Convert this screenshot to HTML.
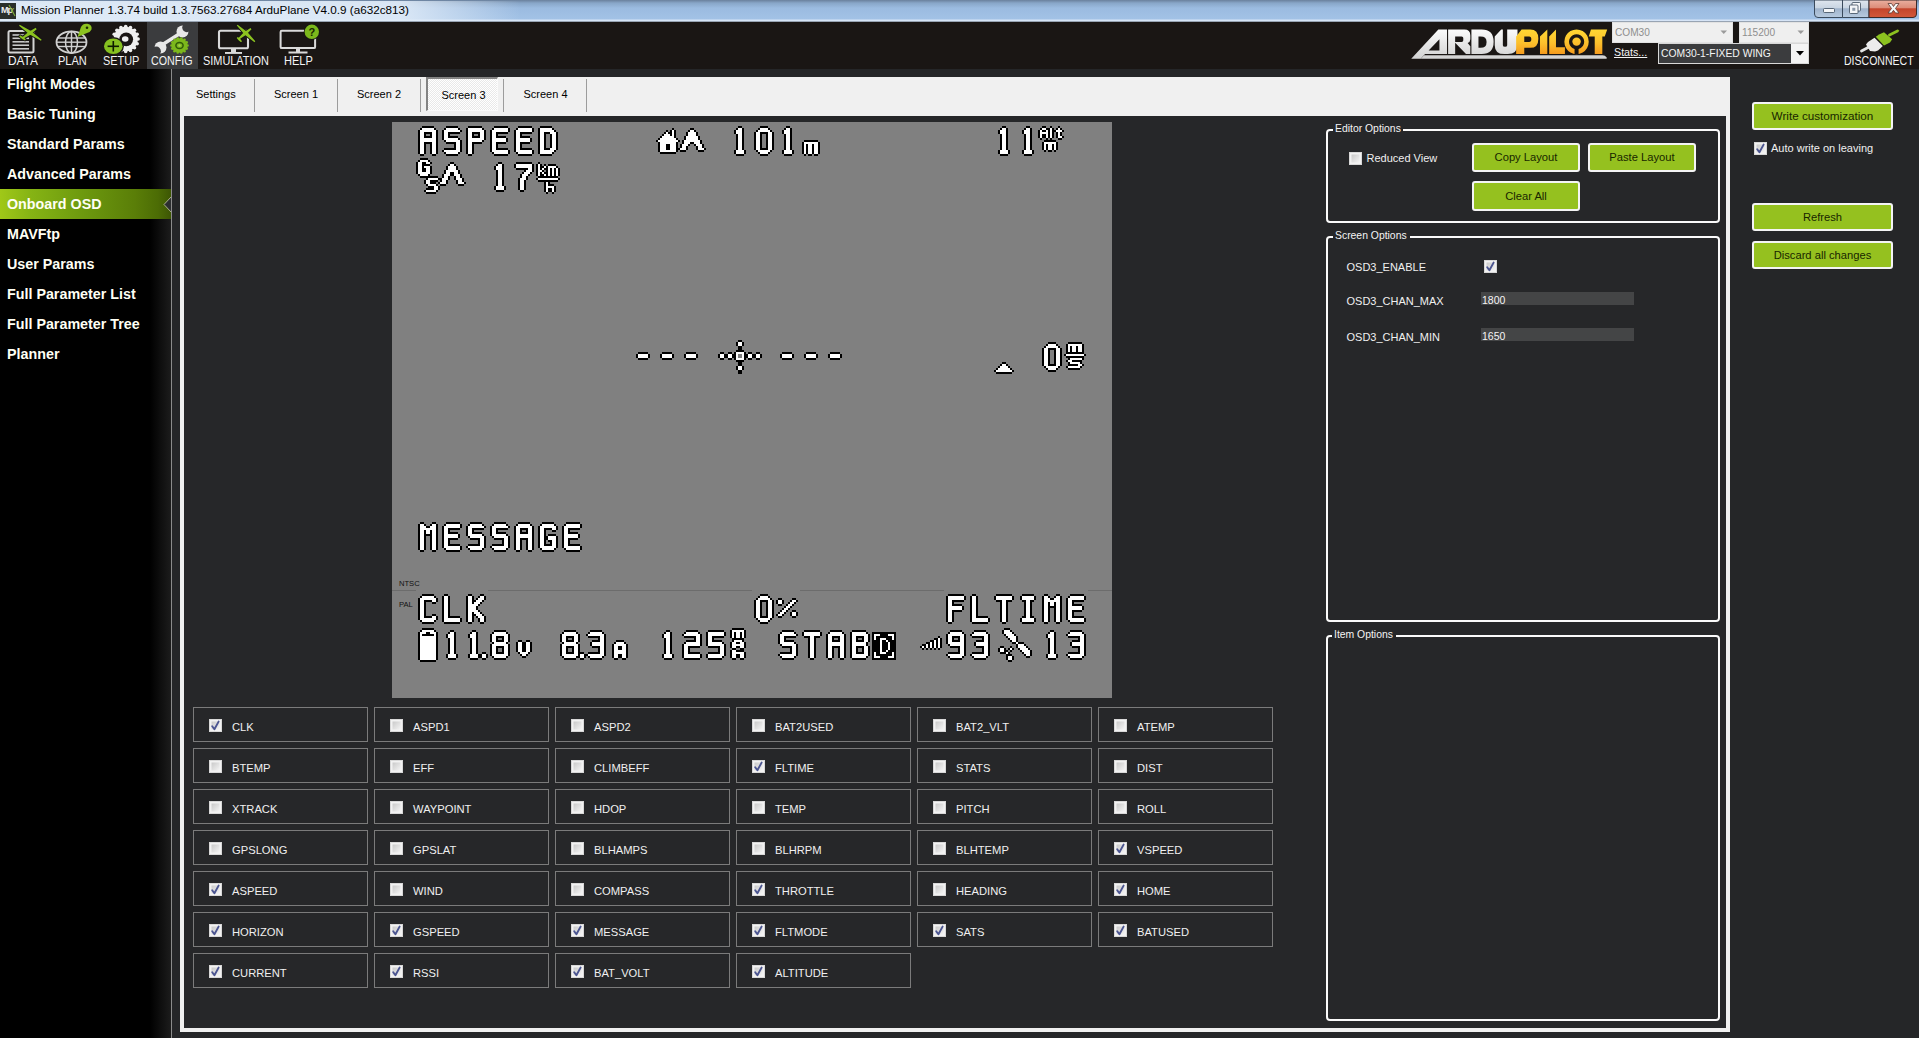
<!DOCTYPE html>
<html><head><meta charset="utf-8">
<style>
*{box-sizing:border-box}
html,body{margin:0;padding:0}
body{width:1919px;height:1038px;overflow:hidden;position:relative;background:#252628;font-family:"Liberation Sans",sans-serif;font-size:11px}
.a{position:absolute;white-space:nowrap}
#title{left:0;top:0;width:1919px;height:22px;background:linear-gradient(180deg,#6a809c 0,#88a6c8 3px,#9bbbe0 8px,#a2c2e6 19px,#d6e4f6 20px,#d6e4f6 21px,#5a6470 22px)}
#tglow{left:0;top:1px;width:520px;height:20px;background:linear-gradient(90deg,rgba(225,236,248,.95) 0,rgba(225,236,248,.9) 400px,rgba(225,236,248,0) 520px)}
#toolbar{left:0;top:22px;width:1919px;height:47px;background:#1a1614}
.tb{color:#f4f4f4;font-size:12px;top:54.3px;line-height:normal;transform:scaleX(0.9);transform-origin:0 0}
#side{left:0;top:69px;width:171px;height:969px;background:linear-gradient(90deg,#000 0,#000 150px,#1c1c1c 171px)}
#sline{left:171px;top:69px;width:1px;height:969px;background:#8c8c8c}
.si{left:7px;color:#fffff4;font-weight:bold;font-size:14.3px;line-height:30px;height:30px}
#tabpage{left:180px;top:77px;width:1550px;height:955px;background:#f0f0f0}
#inner{left:184px;top:116px;width:1542px;height:912px;background:#262729}
.tab{top:77px;height:35px;color:#000;font-size:11.2px;text-align:center;line-height:34px}
.tdiv{top:78px;width:1px;height:34px;background:#a0a0a0}
.gb{width:175px;height:35px;border:1px solid #7b7b7b}
.cb{width:13px;height:13px;border:1px solid #8e8f8f;background:linear-gradient(135deg,#dcdcdc,#f6f6f6);box-shadow:inset 0 0 0 1px #f4f4f4}
.cl{color:#f0f0f0;font-size:11.2px}
.btn{background:#95c11f;border:2px solid #f4f4f4;border-radius:3px;color:#182600;text-align:center;font-size:11.2px}
.grp{border:2px solid #fafafa;border-radius:4px}
.glab{color:#f4f4f4;font-size:10.6px;background:#262729;padding:0 2px}
</style></head><body>

<div id="title" class="a"></div>
<div id="tglow" class="a"></div>
<div class="a" style="left:0;top:3px;width:16px;height:16px;background:#2a2f2a"></div>
<div class="a" style="left:1px;top:5px;color:#eee;font-size:9px;font-weight:bold;letter-spacing:-1px">Mp</div>
<svg class="a" style="left:0;top:3px" width="16" height="16"><path d="M9 2 L15 13" stroke="#7aa83a" stroke-width="1.2"/><path d="M14 5 L11 9" stroke="#7aa83a" stroke-width="1"/></svg>
<div class="a" style="left:21px;top:3px;color:#000;font-size:11.7px;line-height:14px">Mission Planner 1.3.74 build 1.3.7563.27684 ArduPlane V4.0.9 (a632c813)</div>

<div id="toolbar" class="a"></div>
<div class="a" style="left:147px;top:22px;width:51px;height:47px;background:#3b3c3e"></div>
<!-- DATA icon -->
<svg class="a" style="left:0;top:22px" width="50" height="34" viewBox="0 22 50 34">
 <rect x="8.5" y="31" width="25" height="21.5" rx="1.5" fill="none" stroke="#d4d4d4" stroke-width="2"/>
 <g stroke="#c8c8c8" stroke-width="1.6"><line x1="12.5" y1="35" x2="29" y2="35"/><line x1="12.5" y1="38.3" x2="29" y2="38.3"/><line x1="12.5" y1="41.8" x2="29" y2="41.8"/><line x1="12.5" y1="45.2" x2="29" y2="45.2"/><line x1="12.5" y1="48.8" x2="29" y2="48.8"/></g>
  <path d="M19.06 25.70 L29.33 34.19 L40.96 40.70 L41.64 39.70 L31.37 31.21 L19.74 24.70ZM35.74 27.85 L28.07 32.16 L21.50 38.03 L22.30 39.17 L30.03 34.94 L36.66 29.15ZM19.21 36.48 L21.89 38.76 L25.01 40.38 L25.79 39.22 L23.11 36.94 L19.99 35.32Z" fill="none" stroke="#171514" stroke-width="2" stroke-linejoin="round"/><path d="M19.06 25.70 L29.33 34.19 L40.96 40.70 L41.64 39.70 L31.37 31.21 L19.74 24.70ZM35.74 27.85 L28.07 32.16 L21.50 38.03 L22.30 39.17 L30.03 34.94 L36.66 29.15ZM19.21 36.48 L21.89 38.76 L25.01 40.38 L25.79 39.22 L23.11 36.94 L19.99 35.32Z" fill="#8cc220"/>
</svg>
<!-- PLAN icon -->
<svg class="a" style="left:50px;top:22px" width="50" height="34" viewBox="50 22 50 34">
 <ellipse cx="71.5" cy="42.2" rx="15" ry="10.8" fill="none" stroke="#d0d0d0" stroke-width="1.8"/>
 <ellipse cx="71.5" cy="42.2" rx="6" ry="10.8" fill="none" stroke="#d0d0d0" stroke-width="1.5"/>
 <line x1="71.5" y1="31.5" x2="71.5" y2="53" stroke="#d0d0d0" stroke-width="1.5"/>
 <g stroke="#d0d0d0" stroke-width="1.4"><line x1="57" y1="38" x2="86" y2="38"/><line x1="56.5" y1="42.2" x2="86.5" y2="42.2"/><line x1="57" y1="46.5" x2="86" y2="46.5"/></g>
 <path d="M77.5 37 L81 27 Q83 23 87.5 23.8 Q92.5 25 91.5 29.5 Q90.5 32 87 33 Z" fill="#8cc220"/>
 <circle cx="87" cy="27.7" r="1.3" fill="#1b2a00"/>
</svg>
<!-- SETUP icon -->
<svg class="a" style="left:100px;top:22px" width="48" height="34" viewBox="100 22 48 34">
 <g fill="#efefef"><circle cx="125.7" cy="39" r="12.2"/><circle cx="138.10" cy="39.00" r="1.8"/><circle cx="137.16" cy="43.75" r="1.8"/><circle cx="134.47" cy="47.77" r="1.8"/><circle cx="130.45" cy="50.46" r="1.8"/><circle cx="125.70" cy="51.40" r="1.8"/><circle cx="120.95" cy="50.46" r="1.8"/><circle cx="116.93" cy="47.77" r="1.8"/><circle cx="114.24" cy="43.75" r="1.8"/><circle cx="113.30" cy="39.00" r="1.8"/><circle cx="114.24" cy="34.25" r="1.8"/><circle cx="116.93" cy="30.23" r="1.8"/><circle cx="120.95" cy="27.54" r="1.8"/><circle cx="125.70" cy="26.60" r="1.8"/><circle cx="130.45" cy="27.54" r="1.8"/><circle cx="134.47" cy="30.23" r="1.8"/><circle cx="137.16" cy="34.25" r="1.8"/></g>
 <circle cx="126.2" cy="39.3" r="6.9" fill="#1a1614"/>
 <ellipse cx="125.2" cy="39" rx="3.3" ry="2.7" fill="#efefef"/>
 <ellipse cx="113.3" cy="46.3" rx="10.6" ry="9.2" fill="#1a1614"/>
 <ellipse cx="113.3" cy="46.3" rx="9.3" ry="7.8" fill="#86c020"/>
 <g stroke="#0e1a00" stroke-width="1.6"><line x1="107.6" y1="46.3" x2="119" y2="46.3"/><line x1="113.3" y1="41" x2="113.3" y2="51.5"/></g>
</svg>
<!-- CONFIG icon -->
<svg class="a" style="left:147px;top:22px" width="51" height="34" viewBox="147 22 51 34">
 <g fill="#e8e8e8">
  <path d="M159.5 46.5 L181.5 32.5" stroke="#e8e8e8" stroke-width="3.4" stroke-linecap="round"/>
  <circle cx="160.5" cy="47.5" r="6"/>
  <circle cx="182.5" cy="31.5" r="6"/>
 </g>
 <circle cx="156.3" cy="51.2" r="4.6" fill="#3b3c3e"/>
 <circle cx="186.8" cy="27.6" r="4.6" fill="#3b3c3e"/>
 <g fill="#7cb81c"><ellipse cx="179.5" cy="45.5" rx="8" ry="7.2"/><circle cx="187.50" cy="45.50" r="1.3"/><circle cx="186.71" cy="48.62" r="1.3"/><circle cx="184.49" cy="51.13" r="1.3"/><circle cx="181.28" cy="52.52" r="1.3"/><circle cx="177.72" cy="52.52" r="1.3"/><circle cx="174.51" cy="51.13" r="1.3"/><circle cx="172.29" cy="48.62" r="1.3"/><circle cx="171.50" cy="45.50" r="1.3"/><circle cx="172.29" cy="42.38" r="1.3"/><circle cx="174.51" cy="39.87" r="1.3"/><circle cx="177.72" cy="38.48" r="1.3"/><circle cx="181.28" cy="38.48" r="1.3"/><circle cx="184.49" cy="39.87" r="1.3"/><circle cx="186.71" cy="42.38" r="1.3"/></g>
 <ellipse cx="179.5" cy="45.5" rx="3.6" ry="3.1" fill="none" stroke="#2f5a08" stroke-width="1.5"/>
 <circle cx="179.5" cy="45.5" r="1.2" fill="#a6d050"/>
</svg>
<!-- SIMULATION icon -->
<svg class="a" style="left:200px;top:22px" width="62" height="34" viewBox="200 22 62 34">
 <rect x="219" y="30.7" width="29" height="17.6" rx="1.5" fill="none" stroke="#dadada" stroke-width="2.1"/>
 <rect x="231" y="48" width="5" height="4.5" fill="#dadada"/>
 <rect x="225" y="52" width="17" height="1.9" fill="#dadada"/>
  <path d="M236.79 25.54 L244.82 34.71 L254.49 42.14 L255.31 41.26 L247.28 32.09 L237.61 24.66ZM250.49 27.99 L243.66 32.49 L238.05 38.46 L238.95 39.54 L245.84 35.11 L251.51 29.21ZM236.71 37.89 L238.57 40.33 L241.01 42.19 L241.99 41.21 L240.13 38.77 L237.69 36.91Z" fill="none" stroke="#171514" stroke-width="2" stroke-linejoin="round"/><path d="M236.79 25.54 L244.82 34.71 L254.49 42.14 L255.31 41.26 L247.28 32.09 L237.61 24.66ZM250.49 27.99 L243.66 32.49 L238.05 38.46 L238.95 39.54 L245.84 35.11 L251.51 29.21ZM236.71 37.89 L238.57 40.33 L241.01 42.19 L241.99 41.21 L240.13 38.77 L237.69 36.91Z" fill="#8cc220"/>
</svg>
<!-- HELP icon -->
<svg class="a" style="left:270px;top:22px" width="52" height="34" viewBox="270 22 52 34">
 <rect x="280.6" y="30.8" width="34.5" height="17.3" rx="1.2" fill="none" stroke="#dadada" stroke-width="2"/>
 <rect x="296" y="48" width="4" height="4" fill="#dadada"/>
 <rect x="288.5" y="51.5" width="19" height="2" fill="#dadada"/>
 <circle cx="311.8" cy="31.8" r="8" fill="#171514"/>
 <circle cx="311.8" cy="31.8" r="7.2" fill="#7cb81c"/>
 <text x="311.8" y="36" text-anchor="middle" font-family="Liberation Sans" font-weight="bold" font-size="11" fill="#1a2600">?</text>
</svg>
<div class="a tb" style="left:8.3px;transform:scaleX(0.99)">DATA</div>
<div class="a tb" style="left:58px;transform:scaleX(0.92)">PLAN</div>
<div class="a tb" style="left:103px;transform:scaleX(0.91)">SETUP</div>
<div class="a tb" style="left:150.5px;transform:scaleX(0.89)">CONFIG</div>
<div class="a tb" style="left:202.5px;transform:scaleX(0.91)">SIMULATION</div>
<div class="a tb" style="left:284px;transform:scaleX(0.92)">HELP</div>

<!--HEADER-->
<!-- window buttons -->
<svg class="a" style="left:1812px;top:0" width="107" height="20" viewBox="1812 0 107 20">
 <defs>
  <linearGradient id="wbg" x1="0" y1="0" x2="0" y2="1"><stop offset="0" stop-color="#dfe6ee"/><stop offset="0.45" stop-color="#c9d5e2"/><stop offset="0.5" stop-color="#9fb3cb"/><stop offset="1" stop-color="#b8cbe0"/></linearGradient>
  <linearGradient id="wcl" x1="0" y1="0" x2="0" y2="1"><stop offset="0" stop-color="#eab0a0"/><stop offset="0.45" stop-color="#dc8c78"/><stop offset="0.5" stop-color="#c4452c"/><stop offset="1" stop-color="#d2583a"/></linearGradient>
 </defs>
 <path d="M1814.5 0 L1814.5 14 Q1814.5 17.5 1818 17.5 L1842.5 17.5 L1842.5 0 Z" fill="url(#wbg)" stroke="#3a4a5c" stroke-width="1"/>
 <path d="M1842.5 0 L1842.5 17.5 L1869 17.5 L1869 0 Z" fill="url(#wbg)" stroke="#3a4a5c" stroke-width="1"/>
 <path d="M1869 0 L1869 17.5 L1913 17.5 Q1916.5 17.5 1916.5 14 L1916.5 0 Z" fill="url(#wcl)" stroke="#3a2a2a" stroke-width="1"/>
 <rect x="1823.5" y="8.5" width="11" height="4" rx="1" fill="#f4f6f8" stroke="#3a4a5c" stroke-width="0.8"/>
 <rect x="1852" y="2.5" width="8.5" height="8.5" rx="1" fill="#f4f6f8" stroke="#3a4a5c" stroke-width="0.8"/>
 <rect x="1849.5" y="5" width="8.5" height="8.5" rx="1" fill="#f4f6f8" stroke="#3a4a5c" stroke-width="0.8"/>
 <rect x="1852.3" y="7.8" width="3" height="3" fill="#8a98a8"/>
 <path d="M1888 3.5 L1891.5 3.5 L1893.5 6.5 L1895.5 3.5 L1899 3.5 L1895.5 8.5 L1899 13 L1895.5 13 L1893.5 10.3 L1891.5 13 L1888 13 L1891.5 8.5 Z" fill="#f6f6f6" stroke="#5a3a34" stroke-width="0.8"/>
</svg>
<!-- ARDUPILOT logo -->
<svg class="a" style="left:1408px;top:24px" width="204" height="38" viewBox="0 0 204 38">
 <defs>
  <linearGradient id="lw" x1="0" y1="100" x2="0" y2="640" gradientUnits="userSpaceOnUse"><stop offset="0" stop-color="#fbfbfb"/><stop offset="1" stop-color="#d2d2d2"/></linearGradient>
  <linearGradient id="ly" x1="0" y1="100" x2="0" y2="555" gradientUnits="userSpaceOnUse"><stop offset="0" stop-color="#ffd733"/><stop offset="0.55" stop-color="#fcc02c"/><stop offset="1" stop-color="#f59a1d"/></linearGradient>
 </defs>
 <g transform="scale(0.0542)">
  <path fill="url(#lw)" fill-rule="evenodd" d="M60 640 L560 100 L720 100 L720 555 L314 555 L235 640 Z M380 490 L580 280 L580 490 Z"/>
  <path fill="url(#lw)" d="M740 100 L1040 100 Q1150 100 1150 210 L1150 280 Q1150 330 1100 350 L1150 410 L1150 555 L1070 555 L870 345 L870 555 L740 555 Z M870 230 L870 330 L990 330 Q1020 330 1020 300 L1020 260 Q1020 230 990 230 Z" fill-rule="evenodd"/>
  <path fill="url(#lw)" fill-rule="evenodd" d="M1170 100 L1360 100 Q1580 100 1580 328 Q1580 555 1360 555 L1170 555 Z M1300 230 L1340 230 Q1450 230 1450 330 Q1450 440 1340 440 L1300 440 Z"/>
  <path fill="url(#lw)" d="M1600 230 L1720 100 L1750 100 L1750 390 Q1750 420 1790 420 Q1830 420 1830 390 L1830 100 L2020 100 L2020 380 Q2020 555 1840 555 L1780 555 Q1600 555 1600 390 Z"/>
  <g transform="translate(1845.2 0)">
   <path fill="url(#ly)" fill-rule="evenodd" d="M150 230 L250 100 L410 100 Q560 100 560 270 Q560 440 410 440 L300 440 L300 555 L150 555 Z M300 230 L390 230 Q430 230 430 280 Q430 330 390 330 L300 330 Z"/>
   <path fill="url(#ly)" d="M590 230 L725 100 L725 555 L590 555 Z"/>
   <path fill="url(#ly)" d="M760 230 L885 100 L885 430 L1050 430 L1050 555 L760 555 Z"/>
   <path fill="url(#ly)" fill-rule="evenodd" d="M1265 100 A225 228 0 1 1 1264 100 Z M1265 188 A140 140 0 1 0 1266 188 Z"/>
   <circle cx="1265" cy="325" r="78" fill="url(#ly)"/>
   <rect x="1228" y="420" width="74" height="140" fill="#171514"/>
   <path fill="url(#ly)" d="M1490 230 L1530 100 L1830 100 L1785 230 L1740 230 L1740 555 L1600 555 L1600 230 Z"/>
  </g>
  <path fill="#d4d4d4" d="M235 640 L295 575 L3590 575 Q3640 575 3665 620 L3665 640 Z"/>
 </g>
</svg>
<!-- COM boxes -->
<div class="a" style="left:1612px;top:22px;width:121px;height:21px;background:#efefef;border:1px solid #e2e2e2"></div>
<div class="a" style="left:1615px;top:25.5px;font-size:11px;line-height:normal;color:#8e8e8e;transform:scaleX(0.92);transform-origin:0 0">COM30</div>
<svg class="a" style="left:1720px;top:30px" width="8" height="5"><path d="M0.5 0.5 L7 0.5 L3.75 4 Z" fill="#9a9a9a"/></svg>
<div class="a" style="left:1739px;top:22px;width:70px;height:21px;background:#efefef;border:1px solid #e2e2e2"></div>
<div class="a" style="left:1742px;top:25.5px;font-size:11px;line-height:normal;color:#8e8e8e;transform:scaleX(0.92);transform-origin:0 0">115200</div>
<svg class="a" style="left:1797px;top:30px" width="8" height="5"><path d="M0.5 0.5 L7 0.5 L3.75 4 Z" fill="#9a9a9a"/></svg>
<div class="a" style="left:1614px;top:46px;font-size:11.5px;line-height:normal;color:#f4f4f4;text-decoration:underline;transform:scaleX(0.93);transform-origin:0 0">Stats...</div>
<div class="a" style="left:1658px;top:43px;width:151px;height:21px;background:#f4f4f4;border:1px solid #d8d8d8"></div>
<div class="a" style="left:1659px;top:44px;width:132px;height:19px;background:#3b3c3e"></div>
<div class="a" style="left:1660.5px;top:46.5px;font-size:11.5px;line-height:normal;color:#f4f4f4;transform:scaleX(0.9);transform-origin:0 0">COM30-1-FIXED WING</div>
<svg class="a" style="left:1796px;top:51px" width="9" height="5"><path d="M0 0 L8 0 L4 4.5 Z" fill="#000"/></svg>
<!-- DISCONNECT -->
<svg class="a" style="left:1858px;top:28px" width="42" height="27" viewBox="1858 28 42 27">
 <path d="M1861.5 51 L1869 47" stroke="#e6e6e6" stroke-width="2.8" stroke-linecap="round"/>
 <path d="M1866 44.5 L1868 42 L1874.5 37.8 L1882.8 46 L1878 50.5 L1875 51.5 L1870 51 Z" fill="#ececec"/>
 <path d="M1875.8 36.8 L1879 34.5 L1884 32.2 L1892.2 39.2 L1890 42.5 L1884 45.6 Z" fill="#8cc220"/>
 <path d="M1889.5 35 L1897.5 31" stroke="#8cc220" stroke-width="2.8" stroke-linecap="round"/>
</svg>
<div class="a" style="left:1844px;top:54px;font-size:12px;line-height:normal;color:#f4f4f4;transform:scaleX(0.877);transform-origin:0 0">DISCONNECT</div>

<!--/HEADER-->
<div id="side" class="a"></div>
<div class="a" style="left:0;top:189px;width:171px;height:30px;background:linear-gradient(90deg,#a0c818 0,#86b414 30px,#6c980e 85px,#5a7e08 135px,#4c6c05 158px,#3d5604 171px)"></div>
<svg class="a" style="left:163px;top:196px" width="9" height="17" viewBox="0 0 9 17"><path d="M9 0 L0.8 8.5 L9 17 Z" fill="#2c2e30"/><path d="M8.5 0.5 L1 8.5 L8.5 16.5" fill="none" stroke="#b8c098" stroke-width="0.9"/></svg>
<div class="a si" style="top:69px">Flight Modes</div>
<div class="a si" style="top:99px">Basic Tuning</div>
<div class="a si" style="top:129px">Standard Params</div>
<div class="a si" style="top:159px">Advanced Params</div>
<div class="a si" style="top:189px">Onboard OSD</div>
<div class="a si" style="top:219px">MAVFtp</div>
<div class="a si" style="top:249px">User Params</div>
<div class="a si" style="top:279px">Full Parameter List</div>
<div class="a si" style="top:309px">Full Parameter Tree</div>
<div class="a si" style="top:339px">Planner</div>
<div id="sline" class="a"></div>

<div id="tabpage" class="a"></div>
<div id="inner" class="a"></div>
<!--OSD-->
<svg class="a" style="left:392px;top:122px" width="720" height="576" viewBox="0 0 720 576" shape-rendering="crispEdges">
<rect width="720" height="576" fill="#808080"/>
<path d="M0 468h24v1h-24zM96 468h264v1h-264zM408 468h144v1h-144zM696 468h24v1h-24z" fill="#6c6c6c"/>
<path d="M30 4h12v2h-12zM54 4h12v2h-12zM76 4h14v2h-14zM102 4h14v2h-14zM126 4h14v2h-14zM148 4h12v2h-12zM346 4h4v2h-4zM368 4h8v2h-8zM394 4h4v2h-4zM610 4h4v2h-4zM634 4h4v2h-4zM650 4h4v2h-4zM658 4h2v2h-2zM666 4h2v2h-2zM28 6h2v2h-2zM42 6h2v2h-2zM52 6h2v2h-2zM66 6h2v2h-2zM74 6h2v2h-2zM90 6h2v2h-2zM100 6h2v2h-2zM116 6h2v2h-2zM124 6h2v2h-2zM140 6h2v2h-2zM146 6h2v2h-2zM160 6h2v2h-2zM280 6h2v2h-2zM298 6h4v2h-4zM344 6h2v2h-2zM350 6h2v2h-2zM366 6h2v2h-2zM376 6h2v2h-2zM392 6h2v2h-2zM398 6h2v2h-2zM608 6h2v2h-2zM614 6h2v2h-2zM632 6h2v2h-2zM638 6h2v2h-2zM648 6h2v2h-2zM654 6h4v2h-4zM660 6h2v2h-2zM664 6h2v2h-2zM668 6h2v2h-2zM26 8h2v2h-2zM44 8h2v2h-2zM50 8h2v2h-2zM68 8h2v2h-2zM74 8h2v2h-2zM92 8h2v2h-2zM98 8h2v2h-2zM116 8h2v2h-2zM122 8h2v2h-2zM140 8h2v2h-2zM146 8h2v2h-2zM162 8h2v2h-2zM274 8h2v2h-2zM278 8h2v2h-2zM282 8h2v2h-2zM296 8h2v2h-2zM302 8h2v2h-2zM342 8h2v2h-2zM350 8h2v2h-2zM364 8h2v2h-2zM378 8h2v2h-2zM390 8h2v2h-2zM398 8h2v2h-2zM606 8h2v2h-2zM614 8h2v2h-2zM630 8h2v2h-2zM638 8h2v2h-2zM646 8h2v2h-2zM650 8h4v2h-4zM656 8h2v2h-2zM660 8h4v2h-4zM670 8h2v2h-2zM26 10h2v2h-2zM32 10h8v2h-8zM44 10h2v2h-2zM50 10h2v2h-2zM56 10h12v2h-12zM74 10h2v2h-2zM80 10h8v2h-8zM92 10h2v2h-2zM98 10h2v2h-2zM104 10h12v2h-12zM122 10h2v2h-2zM128 10h12v2h-12zM146 10h2v2h-2zM152 10h6v2h-6zM164 10h2v2h-2zM272 10h2v2h-2zM276 10h4v2h-4zM282 10h2v2h-2zM294 10h2v2h-2zM304 10h2v2h-2zM342 10h2v2h-2zM350 10h2v2h-2zM362 10h2v2h-2zM368 10h8v2h-8zM380 10h2v2h-2zM390 10h2v2h-2zM398 10h2v2h-2zM606 10h2v2h-2zM614 10h2v2h-2zM630 10h2v2h-2zM638 10h2v2h-2zM646 10h2v2h-2zM656 10h2v2h-2zM660 10h2v2h-2zM664 10h2v2h-2zM668 10h2v2h-2zM26 12h2v2h-2zM32 12h2v2h-2zM38 12h2v2h-2zM44 12h2v2h-2zM50 12h2v2h-2zM56 12h2v2h-2zM74 12h2v2h-2zM80 12h2v2h-2zM86 12h2v2h-2zM92 12h2v2h-2zM98 12h2v2h-2zM104 12h2v2h-2zM122 12h2v2h-2zM128 12h2v2h-2zM146 12h2v2h-2zM152 12h2v2h-2zM158 12h2v2h-2zM164 12h2v2h-2zM270 12h2v2h-2zM278 12h2v2h-2zM282 12h2v2h-2zM294 12h2v2h-2zM304 12h2v2h-2zM344 12h2v2h-2zM350 12h2v2h-2zM362 12h2v2h-2zM368 12h2v2h-2zM374 12h2v2h-2zM380 12h2v2h-2zM392 12h2v2h-2zM398 12h2v2h-2zM608 12h2v2h-2zM614 12h2v2h-2zM632 12h2v2h-2zM638 12h2v2h-2zM646 12h2v2h-2zM650 12h4v2h-4zM656 12h2v2h-2zM660 12h2v2h-2zM664 12h2v2h-2zM668 12h2v2h-2zM26 14h2v2h-2zM32 14h8v2h-8zM44 14h2v2h-2zM50 14h2v2h-2zM56 14h10v2h-10zM74 14h2v2h-2zM80 14h8v2h-8zM92 14h2v2h-2zM98 14h2v2h-2zM104 14h10v2h-10zM122 14h2v2h-2zM128 14h10v2h-10zM146 14h2v2h-2zM152 14h2v2h-2zM158 14h2v2h-2zM164 14h2v2h-2zM268 14h2v2h-2zM282 14h2v2h-2zM292 14h2v2h-2zM306 14h2v2h-2zM344 14h2v2h-2zM350 14h2v2h-2zM362 14h2v2h-2zM368 14h2v2h-2zM374 14h2v2h-2zM380 14h2v2h-2zM392 14h2v2h-2zM398 14h2v2h-2zM608 14h2v2h-2zM614 14h2v2h-2zM632 14h2v2h-2zM638 14h2v2h-2zM646 14h2v2h-2zM650 14h4v2h-4zM656 14h2v2h-2zM660 14h2v2h-2zM664 14h2v2h-2zM670 14h2v2h-2zM26 16h2v2h-2zM44 16h2v2h-2zM50 16h2v2h-2zM66 16h2v2h-2zM74 16h2v2h-2zM92 16h2v2h-2zM98 16h2v2h-2zM114 16h2v2h-2zM122 16h2v2h-2zM138 16h2v2h-2zM146 16h2v2h-2zM152 16h2v2h-2zM158 16h2v2h-2zM164 16h2v2h-2zM266 16h2v2h-2zM284 16h2v2h-2zM292 16h2v2h-2zM306 16h2v2h-2zM344 16h2v2h-2zM350 16h2v2h-2zM362 16h2v2h-2zM368 16h2v2h-2zM374 16h2v2h-2zM380 16h2v2h-2zM392 16h2v2h-2zM398 16h2v2h-2zM608 16h2v2h-2zM614 16h2v2h-2zM632 16h2v2h-2zM638 16h2v2h-2zM648 16h2v2h-2zM654 16h2v2h-2zM658 16h2v2h-2zM666 16h4v2h-4zM26 18h2v2h-2zM44 18h2v2h-2zM52 18h2v2h-2zM68 18h2v2h-2zM74 18h2v2h-2zM90 18h2v2h-2zM98 18h2v2h-2zM114 18h2v2h-2zM122 18h2v2h-2zM138 18h2v2h-2zM146 18h2v2h-2zM152 18h2v2h-2zM158 18h2v2h-2zM164 18h2v2h-2zM264 18h2v2h-2zM286 18h2v2h-2zM290 18h2v2h-2zM308 18h2v2h-2zM344 18h2v2h-2zM350 18h2v2h-2zM362 18h2v2h-2zM368 18h2v2h-2zM374 18h2v2h-2zM380 18h2v2h-2zM392 18h2v2h-2zM398 18h2v2h-2zM412 18h14v2h-14zM608 18h2v2h-2zM614 18h2v2h-2zM632 18h2v2h-2zM638 18h2v2h-2zM652 18h12v2h-12zM26 20h2v2h-2zM32 20h8v2h-8zM44 20h2v2h-2zM54 20h10v2h-10zM68 20h2v2h-2zM74 20h2v2h-2zM80 20h10v2h-10zM98 20h2v2h-2zM104 20h10v2h-10zM122 20h2v2h-2zM128 20h10v2h-10zM146 20h2v2h-2zM152 20h2v2h-2zM158 20h2v2h-2zM164 20h2v2h-2zM266 20h2v2h-2zM284 20h2v2h-2zM290 20h2v2h-2zM298 20h4v2h-4zM308 20h2v2h-2zM344 20h2v2h-2zM350 20h2v2h-2zM362 20h2v2h-2zM368 20h2v2h-2zM374 20h2v2h-2zM380 20h2v2h-2zM392 20h2v2h-2zM398 20h2v2h-2zM410 20h2v2h-2zM426 20h2v2h-2zM608 20h2v2h-2zM614 20h2v2h-2zM632 20h2v2h-2zM638 20h2v2h-2zM650 20h2v2h-2zM664 20h2v2h-2zM26 22h2v2h-2zM32 22h2v2h-2zM38 22h2v2h-2zM44 22h2v2h-2zM62 22h2v2h-2zM68 22h2v2h-2zM74 22h2v2h-2zM80 22h2v2h-2zM98 22h2v2h-2zM104 22h2v2h-2zM122 22h2v2h-2zM128 22h2v2h-2zM146 22h2v2h-2zM152 22h2v2h-2zM158 22h2v2h-2zM164 22h2v2h-2zM266 22h2v2h-2zM274 22h4v2h-4zM284 22h2v2h-2zM288 22h2v2h-2zM296 22h2v2h-2zM302 22h2v2h-2zM310 22h2v2h-2zM344 22h2v2h-2zM350 22h2v2h-2zM362 22h2v2h-2zM368 22h2v2h-2zM374 22h2v2h-2zM380 22h2v2h-2zM392 22h2v2h-2zM398 22h2v2h-2zM410 22h2v2h-2zM414 22h2v2h-2zM420 22h2v2h-2zM426 22h2v2h-2zM608 22h2v2h-2zM614 22h2v2h-2zM632 22h2v2h-2zM638 22h2v2h-2zM650 22h2v2h-2zM654 22h2v2h-2zM660 22h2v2h-2zM664 22h2v2h-2zM26 24h2v2h-2zM32 24h2v2h-2zM38 24h2v2h-2zM44 24h2v2h-2zM62 24h2v2h-2zM68 24h2v2h-2zM74 24h2v2h-2zM80 24h2v2h-2zM98 24h2v2h-2zM104 24h2v2h-2zM122 24h2v2h-2zM128 24h2v2h-2zM146 24h2v2h-2zM152 24h2v2h-2zM158 24h2v2h-2zM164 24h2v2h-2zM266 24h2v2h-2zM274 24h4v2h-4zM284 24h2v2h-2zM288 24h2v2h-2zM294 24h2v2h-2zM304 24h2v2h-2zM310 24h2v2h-2zM344 24h2v2h-2zM350 24h2v2h-2zM362 24h2v2h-2zM368 24h2v2h-2zM374 24h2v2h-2zM380 24h2v2h-2zM392 24h2v2h-2zM398 24h2v2h-2zM410 24h2v2h-2zM414 24h2v2h-2zM420 24h2v2h-2zM426 24h2v2h-2zM608 24h2v2h-2zM614 24h2v2h-2zM632 24h2v2h-2zM638 24h2v2h-2zM650 24h2v2h-2zM654 24h2v2h-2zM660 24h2v2h-2zM664 24h2v2h-2zM26 26h2v2h-2zM32 26h2v2h-2zM38 26h2v2h-2zM44 26h2v2h-2zM52 26h12v2h-12zM68 26h2v2h-2zM74 26h2v2h-2zM80 26h2v2h-2zM98 26h2v2h-2zM104 26h12v2h-12zM122 26h2v2h-2zM128 26h12v2h-12zM146 26h2v2h-2zM152 26h6v2h-6zM164 26h2v2h-2zM266 26h2v2h-2zM274 26h4v2h-4zM284 26h4v2h-4zM294 26h2v2h-2zM304 26h2v2h-2zM312 26h2v2h-2zM344 26h2v2h-2zM350 26h2v2h-2zM362 26h2v2h-2zM368 26h8v2h-8zM380 26h2v2h-2zM392 26h2v2h-2zM398 26h2v2h-2zM410 26h2v2h-2zM414 26h2v2h-2zM420 26h2v2h-2zM426 26h2v2h-2zM608 26h2v2h-2zM614 26h2v2h-2zM632 26h2v2h-2zM638 26h2v2h-2zM650 26h2v2h-2zM654 26h2v2h-2zM660 26h2v2h-2zM664 26h2v2h-2zM26 28h2v2h-2zM32 28h2v2h-2zM38 28h2v2h-2zM44 28h2v2h-2zM50 28h2v2h-2zM68 28h2v2h-2zM74 28h2v2h-2zM80 28h2v2h-2zM98 28h2v2h-2zM116 28h2v2h-2zM122 28h2v2h-2zM140 28h2v2h-2zM146 28h2v2h-2zM162 28h2v2h-2zM266 28h2v2h-2zM284 28h2v2h-2zM288 28h6v2h-6zM306 28h6v2h-6zM342 28h2v2h-2zM352 28h2v2h-2zM364 28h2v2h-2zM378 28h2v2h-2zM390 28h2v2h-2zM400 28h2v2h-2zM410 28h2v2h-2zM414 28h2v2h-2zM420 28h2v2h-2zM426 28h2v2h-2zM606 28h2v2h-2zM616 28h2v2h-2zM630 28h2v2h-2zM640 28h2v2h-2zM652 28h2v2h-2zM656 28h4v2h-4zM662 28h2v2h-2zM26 30h2v2h-2zM32 30h2v2h-2zM38 30h2v2h-2zM44 30h2v2h-2zM52 30h2v2h-2zM66 30h2v2h-2zM74 30h2v2h-2zM80 30h2v2h-2zM100 30h2v2h-2zM116 30h2v2h-2zM124 30h2v2h-2zM140 30h2v2h-2zM146 30h2v2h-2zM160 30h2v2h-2zM268 30h16v2h-16zM342 30h2v2h-2zM352 30h2v2h-2zM366 30h2v2h-2zM376 30h2v2h-2zM390 30h2v2h-2zM400 30h2v2h-2zM410 30h2v2h-2zM414 30h2v2h-2zM420 30h2v2h-2zM426 30h2v2h-2zM606 30h2v2h-2zM616 30h2v2h-2zM630 30h2v2h-2zM640 30h2v2h-2zM28 32h4v2h-4zM40 32h4v2h-4zM54 32h12v2h-12zM76 32h4v2h-4zM102 32h14v2h-14zM126 32h14v2h-14zM148 32h12v2h-12zM344 32h8v2h-8zM368 32h8v2h-8zM392 32h8v2h-8zM412 32h2v2h-2zM416 32h4v2h-4zM422 32h4v2h-4zM608 32h8v2h-8zM632 32h8v2h-8zM28 36h8v2h-8zM26 38h2v2h-2zM36 38h2v2h-2zM24 40h2v2h-2zM30 40h4v2h-4zM38 40h2v2h-2zM58 40h4v2h-4zM106 40h4v2h-4zM124 40h16v2h-16zM146 40h2v2h-2zM24 42h2v2h-2zM30 42h8v2h-8zM56 42h2v2h-2zM62 42h2v2h-2zM104 42h2v2h-2zM110 42h2v2h-2zM122 42h2v2h-2zM140 42h2v2h-2zM144 42h2v2h-2zM148 42h2v2h-2zM152 42h2v2h-2zM156 42h8v2h-8zM24 44h2v2h-2zM30 44h2v2h-2zM38 44h2v2h-2zM54 44h2v2h-2zM64 44h2v2h-2zM102 44h2v2h-2zM110 44h2v2h-2zM122 44h2v2h-2zM140 44h2v2h-2zM144 44h2v2h-2zM148 44h4v2h-4zM154 44h2v2h-2zM164 44h2v2h-2zM24 46h2v2h-2zM30 46h4v2h-4zM38 46h2v2h-2zM54 46h2v2h-2zM64 46h2v2h-2zM102 46h2v2h-2zM110 46h2v2h-2zM124 46h12v2h-12zM140 46h2v2h-2zM144 46h2v2h-2zM148 46h2v2h-2zM152 46h4v2h-4zM158 46h2v2h-2zM162 46h2v2h-2zM166 46h2v2h-2zM24 48h2v2h-2zM30 48h4v2h-4zM38 48h2v2h-2zM52 48h2v2h-2zM66 48h2v2h-2zM104 48h2v2h-2zM110 48h2v2h-2zM132 48h2v2h-2zM140 48h2v2h-2zM144 48h2v2h-2zM150 48h2v2h-2zM154 48h2v2h-2zM158 48h2v2h-2zM162 48h2v2h-2zM166 48h2v2h-2zM24 50h2v2h-2zM38 50h2v2h-2zM52 50h2v2h-2zM58 50h4v2h-4zM66 50h2v2h-2zM104 50h2v2h-2zM110 50h2v2h-2zM130 50h2v2h-2zM138 50h2v2h-2zM144 50h2v2h-2zM148 50h2v2h-2zM152 50h4v2h-4zM158 50h2v2h-2zM162 50h2v2h-2zM166 50h2v2h-2zM26 52h2v2h-2zM36 52h2v2h-2zM50 52h2v2h-2zM58 52h4v2h-4zM68 52h2v2h-2zM104 52h2v2h-2zM110 52h2v2h-2zM128 52h2v2h-2zM136 52h2v2h-2zM144 52h2v2h-2zM148 52h4v2h-4zM154 52h2v2h-2zM158 52h2v2h-2zM162 52h2v2h-2zM166 52h2v2h-2zM28 54h18v2h-18zM50 54h2v2h-2zM56 54h2v2h-2zM62 54h2v2h-2zM68 54h2v2h-2zM104 54h2v2h-2zM110 54h2v2h-2zM128 54h2v2h-2zM134 54h2v2h-2zM146 54h20v2h-20zM34 56h2v2h-2zM46 56h4v2h-4zM56 56h2v2h-2zM62 56h2v2h-2zM70 56h2v2h-2zM104 56h2v2h-2zM110 56h2v2h-2zM126 56h2v2h-2zM134 56h2v2h-2zM144 56h2v2h-2zM166 56h2v2h-2zM32 58h2v2h-2zM38 58h8v2h-8zM48 58h2v2h-2zM54 58h2v2h-2zM64 58h2v2h-2zM70 58h2v2h-2zM104 58h2v2h-2zM110 58h2v2h-2zM126 58h2v2h-2zM132 58h2v2h-2zM146 58h20v2h-20zM32 60h2v2h-2zM38 60h6v2h-6zM46 60h2v2h-2zM54 60h2v2h-2zM64 60h2v2h-2zM72 60h2v2h-2zM104 60h2v2h-2zM110 60h2v2h-2zM126 60h2v2h-2zM132 60h2v2h-2zM152 60h2v2h-2zM156 60h2v2h-2zM34 62h2v2h-2zM44 62h2v2h-2zM48 62h6v2h-6zM66 62h6v2h-6zM104 62h2v2h-2zM110 62h2v2h-2zM126 62h2v2h-2zM132 62h2v2h-2zM152 62h2v2h-2zM156 62h6v2h-6zM36 64h6v2h-6zM46 64h2v2h-2zM102 64h2v2h-2zM112 64h2v2h-2zM126 64h2v2h-2zM132 64h2v2h-2zM152 64h2v2h-2zM162 64h2v2h-2zM34 66h8v2h-8zM46 66h2v2h-2zM102 66h2v2h-2zM112 66h2v2h-2zM126 66h2v2h-2zM132 66h2v2h-2zM152 66h2v2h-2zM156 66h4v2h-4zM162 66h2v2h-2zM32 68h2v2h-2zM44 68h2v2h-2zM104 68h8v2h-8zM128 68h4v2h-4zM152 68h2v2h-2zM156 68h4v2h-4zM162 68h2v2h-2zM34 70h10v2h-10zM154 70h2v2h-2zM160 70h2v2h-2zM346 218h4v2h-4zM344 220h2v2h-2zM350 220h2v2h-2zM656 220h8v2h-8zM676 220h14v2h-14zM344 222h2v2h-2zM350 222h2v2h-2zM654 222h2v2h-2zM664 222h2v2h-2zM674 222h2v2h-2zM690 222h2v2h-2zM346 224h4v2h-4zM652 224h2v2h-2zM666 224h2v2h-2zM674 224h2v2h-2zM678 224h2v2h-2zM684 224h2v2h-2zM690 224h2v2h-2zM346 226h4v2h-4zM650 226h2v2h-2zM656 226h8v2h-8zM668 226h2v2h-2zM674 226h2v2h-2zM678 226h2v2h-2zM684 226h2v2h-2zM690 226h2v2h-2zM344 228h8v2h-8zM650 228h2v2h-2zM656 228h2v2h-2zM662 228h2v2h-2zM668 228h2v2h-2zM674 228h2v2h-2zM678 228h2v2h-2zM684 228h2v2h-2zM690 228h2v2h-2zM246 230h10v2h-10zM270 230h10v2h-10zM294 230h10v2h-10zM328 230h4v2h-4zM336 230h4v2h-4zM342 230h2v2h-2zM352 230h2v2h-2zM356 230h4v2h-4zM364 230h4v2h-4zM390 230h10v2h-10zM414 230h10v2h-10zM438 230h10v2h-10zM650 230h2v2h-2zM656 230h2v2h-2zM662 230h2v2h-2zM668 230h2v2h-2zM674 230h18v2h-18zM244 232h2v2h-2zM256 232h2v2h-2zM268 232h2v2h-2zM280 232h2v2h-2zM292 232h2v2h-2zM304 232h2v2h-2zM326 232h2v2h-2zM332 232h4v2h-4zM340 232h4v2h-4zM352 232h4v2h-4zM360 232h4v2h-4zM368 232h2v2h-2zM388 232h2v2h-2zM400 232h2v2h-2zM412 232h2v2h-2zM424 232h2v2h-2zM436 232h2v2h-2zM448 232h2v2h-2zM650 232h2v2h-2zM656 232h2v2h-2zM662 232h2v2h-2zM668 232h2v2h-2zM672 232h2v2h-2zM692 232h2v2h-2zM244 234h2v2h-2zM256 234h2v2h-2zM268 234h2v2h-2zM280 234h2v2h-2zM292 234h2v2h-2zM304 234h2v2h-2zM326 234h2v2h-2zM332 234h4v2h-4zM340 234h4v2h-4zM352 234h4v2h-4zM360 234h4v2h-4zM368 234h2v2h-2zM388 234h2v2h-2zM400 234h2v2h-2zM412 234h2v2h-2zM424 234h2v2h-2zM436 234h2v2h-2zM448 234h2v2h-2zM650 234h2v2h-2zM656 234h2v2h-2zM662 234h2v2h-2zM668 234h2v2h-2zM674 234h18v2h-18zM246 236h10v2h-10zM270 236h10v2h-10zM294 236h10v2h-10zM328 236h4v2h-4zM336 236h4v2h-4zM342 236h2v2h-2zM352 236h2v2h-2zM356 236h4v2h-4zM364 236h4v2h-4zM390 236h10v2h-10zM414 236h10v2h-10zM438 236h10v2h-10zM650 236h2v2h-2zM656 236h2v2h-2zM662 236h2v2h-2zM668 236h2v2h-2zM676 236h2v2h-2zM690 236h2v2h-2zM344 238h8v2h-8zM650 238h2v2h-2zM656 238h2v2h-2zM662 238h2v2h-2zM668 238h2v2h-2zM674 238h2v2h-2zM680 238h10v2h-10zM346 240h4v2h-4zM610 240h4v2h-4zM650 240h2v2h-2zM656 240h2v2h-2zM662 240h2v2h-2zM668 240h2v2h-2zM676 240h2v2h-2zM688 240h2v2h-2zM346 242h4v2h-4zM608 242h2v2h-2zM614 242h2v2h-2zM650 242h2v2h-2zM656 242h8v2h-8zM668 242h2v2h-2zM676 242h10v2h-10zM690 242h2v2h-2zM344 244h2v2h-2zM350 244h2v2h-2zM606 244h2v2h-2zM616 244h2v2h-2zM652 244h2v2h-2zM666 244h2v2h-2zM674 244h2v2h-2zM688 244h2v2h-2zM344 246h2v2h-2zM350 246h2v2h-2zM604 246h2v2h-2zM618 246h2v2h-2zM654 246h2v2h-2zM664 246h2v2h-2zM676 246h12v2h-12zM346 248h4v2h-4zM602 248h2v2h-2zM620 248h2v2h-2zM656 248h8v2h-8zM346 250h4v2h-4zM604 250h16v2h-16zM28 400h4v2h-4zM40 400h4v2h-4zM54 400h14v2h-14zM78 400h12v2h-12zM102 400h12v2h-12zM126 400h12v2h-12zM150 400h12v2h-12zM174 400h14v2h-14zM26 402h2v2h-2zM32 402h2v2h-2zM38 402h2v2h-2zM44 402h2v2h-2zM52 402h2v2h-2zM68 402h2v2h-2zM76 402h2v2h-2zM90 402h2v2h-2zM100 402h2v2h-2zM114 402h2v2h-2zM124 402h2v2h-2zM138 402h2v2h-2zM148 402h2v2h-2zM162 402h2v2h-2zM172 402h2v2h-2zM188 402h2v2h-2zM26 404h2v2h-2zM34 404h4v2h-4zM44 404h2v2h-2zM50 404h2v2h-2zM68 404h2v2h-2zM74 404h2v2h-2zM92 404h2v2h-2zM98 404h2v2h-2zM116 404h2v2h-2zM122 404h2v2h-2zM140 404h2v2h-2zM146 404h2v2h-2zM164 404h2v2h-2zM170 404h2v2h-2zM188 404h2v2h-2zM26 406h2v2h-2zM44 406h2v2h-2zM50 406h2v2h-2zM56 406h12v2h-12zM74 406h2v2h-2zM80 406h12v2h-12zM98 406h2v2h-2zM104 406h12v2h-12zM122 406h2v2h-2zM128 406h8v2h-8zM140 406h2v2h-2zM146 406h2v2h-2zM152 406h8v2h-8zM164 406h2v2h-2zM170 406h2v2h-2zM176 406h12v2h-12zM26 408h2v2h-2zM32 408h2v2h-2zM38 408h2v2h-2zM44 408h2v2h-2zM50 408h2v2h-2zM56 408h2v2h-2zM74 408h2v2h-2zM80 408h2v2h-2zM98 408h2v2h-2zM104 408h2v2h-2zM122 408h2v2h-2zM128 408h2v2h-2zM134 408h2v2h-2zM140 408h2v2h-2zM146 408h2v2h-2zM152 408h2v2h-2zM160 408h4v2h-4zM170 408h2v2h-2zM176 408h2v2h-2zM26 410h2v2h-2zM32 410h2v2h-2zM38 410h2v2h-2zM44 410h2v2h-2zM50 410h2v2h-2zM56 410h10v2h-10zM74 410h2v2h-2zM80 410h10v2h-10zM98 410h2v2h-2zM104 410h10v2h-10zM122 410h2v2h-2zM128 410h8v2h-8zM140 410h2v2h-2zM146 410h2v2h-2zM152 410h2v2h-2zM170 410h2v2h-2zM176 410h10v2h-10zM26 412h2v2h-2zM32 412h8v2h-8zM44 412h2v2h-2zM50 412h2v2h-2zM66 412h2v2h-2zM74 412h2v2h-2zM90 412h2v2h-2zM98 412h2v2h-2zM114 412h2v2h-2zM122 412h2v2h-2zM140 412h2v2h-2zM146 412h2v2h-2zM152 412h2v2h-2zM156 412h8v2h-8zM170 412h2v2h-2zM186 412h2v2h-2zM26 414h2v2h-2zM32 414h2v2h-2zM38 414h2v2h-2zM44 414h2v2h-2zM50 414h2v2h-2zM66 414h2v2h-2zM76 414h2v2h-2zM92 414h2v2h-2zM100 414h2v2h-2zM116 414h2v2h-2zM122 414h2v2h-2zM140 414h2v2h-2zM146 414h2v2h-2zM152 414h4v2h-4zM164 414h2v2h-2zM170 414h2v2h-2zM186 414h2v2h-2zM26 416h2v2h-2zM32 416h2v2h-2zM38 416h2v2h-2zM44 416h2v2h-2zM50 416h2v2h-2zM56 416h10v2h-10zM78 416h10v2h-10zM92 416h2v2h-2zM102 416h10v2h-10zM116 416h2v2h-2zM122 416h2v2h-2zM128 416h8v2h-8zM140 416h2v2h-2zM146 416h2v2h-2zM152 416h4v2h-4zM164 416h2v2h-2zM170 416h2v2h-2zM176 416h10v2h-10zM26 418h2v2h-2zM32 418h2v2h-2zM38 418h2v2h-2zM44 418h2v2h-2zM50 418h2v2h-2zM56 418h2v2h-2zM86 418h2v2h-2zM92 418h2v2h-2zM110 418h2v2h-2zM116 418h2v2h-2zM122 418h2v2h-2zM128 418h2v2h-2zM134 418h2v2h-2zM140 418h2v2h-2zM146 418h2v2h-2zM152 418h2v2h-2zM156 418h4v2h-4zM164 418h2v2h-2zM170 418h2v2h-2zM176 418h2v2h-2zM26 420h2v2h-2zM32 420h2v2h-2zM38 420h2v2h-2zM44 420h2v2h-2zM50 420h2v2h-2zM56 420h2v2h-2zM86 420h2v2h-2zM92 420h2v2h-2zM110 420h2v2h-2zM116 420h2v2h-2zM122 420h2v2h-2zM128 420h2v2h-2zM134 420h2v2h-2zM140 420h2v2h-2zM146 420h2v2h-2zM152 420h2v2h-2zM158 420h2v2h-2zM164 420h2v2h-2zM170 420h2v2h-2zM176 420h2v2h-2zM26 422h2v2h-2zM32 422h2v2h-2zM38 422h2v2h-2zM44 422h2v2h-2zM50 422h2v2h-2zM56 422h12v2h-12zM76 422h12v2h-12zM92 422h2v2h-2zM100 422h12v2h-12zM116 422h2v2h-2zM122 422h2v2h-2zM128 422h2v2h-2zM134 422h2v2h-2zM140 422h2v2h-2zM146 422h2v2h-2zM152 422h8v2h-8zM164 422h2v2h-2zM170 422h2v2h-2zM176 422h12v2h-12zM26 424h2v2h-2zM32 424h2v2h-2zM38 424h2v2h-2zM44 424h2v2h-2zM50 424h2v2h-2zM68 424h2v2h-2zM74 424h2v2h-2zM92 424h2v2h-2zM98 424h2v2h-2zM116 424h2v2h-2zM122 424h2v2h-2zM128 424h2v2h-2zM134 424h2v2h-2zM140 424h2v2h-2zM146 424h2v2h-2zM164 424h2v2h-2zM170 424h2v2h-2zM188 424h2v2h-2zM26 426h2v2h-2zM32 426h2v2h-2zM38 426h2v2h-2zM44 426h2v2h-2zM52 426h2v2h-2zM68 426h2v2h-2zM76 426h2v2h-2zM90 426h2v2h-2zM100 426h2v2h-2zM114 426h2v2h-2zM122 426h2v2h-2zM128 426h2v2h-2zM134 426h2v2h-2zM140 426h2v2h-2zM148 426h2v2h-2zM162 426h2v2h-2zM172 426h2v2h-2zM188 426h2v2h-2zM28 428h4v2h-4zM40 428h4v2h-4zM54 428h14v2h-14zM78 428h12v2h-12zM102 428h12v2h-12zM124 428h4v2h-4zM136 428h4v2h-4zM150 428h12v2h-12zM174 428h14v2h-14zM30 472h12v2h-12zM52 472h4v2h-4zM76 472h4v2h-4zM88 472h4v2h-4zM368 472h8v2h-8zM556 472h16v2h-16zM580 472h4v2h-4zM604 472h16v2h-16zM630 472h12v2h-12zM652 472h4v2h-4zM664 472h4v2h-4zM678 472h14v2h-14zM28 474h2v2h-2zM42 474h2v2h-2zM50 474h2v2h-2zM56 474h2v2h-2zM74 474h2v2h-2zM80 474h2v2h-2zM86 474h2v2h-2zM92 474h2v2h-2zM366 474h2v2h-2zM376 474h2v2h-2zM554 474h2v2h-2zM572 474h2v2h-2zM578 474h2v2h-2zM584 474h2v2h-2zM602 474h2v2h-2zM620 474h2v2h-2zM628 474h2v2h-2zM642 474h2v2h-2zM650 474h2v2h-2zM656 474h2v2h-2zM662 474h2v2h-2zM668 474h2v2h-2zM676 474h2v2h-2zM692 474h2v2h-2zM26 476h2v2h-2zM44 476h2v2h-2zM50 476h2v2h-2zM56 476h2v2h-2zM74 476h2v2h-2zM80 476h2v2h-2zM84 476h2v2h-2zM92 476h2v2h-2zM364 476h2v2h-2zM378 476h2v2h-2zM386 476h4v2h-4zM400 476h4v2h-4zM554 476h2v2h-2zM572 476h2v2h-2zM578 476h2v2h-2zM584 476h2v2h-2zM602 476h2v2h-2zM620 476h2v2h-2zM628 476h2v2h-2zM642 476h2v2h-2zM650 476h2v2h-2zM658 476h4v2h-4zM668 476h2v2h-2zM674 476h2v2h-2zM692 476h2v2h-2zM26 478h2v2h-2zM32 478h8v2h-8zM44 478h2v2h-2zM50 478h2v2h-2zM56 478h2v2h-2zM74 478h2v2h-2zM80 478h4v2h-4zM90 478h2v2h-2zM362 478h2v2h-2zM368 478h8v2h-8zM380 478h2v2h-2zM384 478h2v2h-2zM390 478h2v2h-2zM398 478h2v2h-2zM404 478h2v2h-2zM554 478h2v2h-2zM560 478h12v2h-12zM578 478h2v2h-2zM584 478h2v2h-2zM604 478h6v2h-6zM614 478h6v2h-6zM630 478h4v2h-4zM638 478h4v2h-4zM650 478h2v2h-2zM668 478h2v2h-2zM674 478h2v2h-2zM680 478h12v2h-12zM26 480h2v2h-2zM32 480h2v2h-2zM40 480h4v2h-4zM50 480h2v2h-2zM56 480h2v2h-2zM74 480h2v2h-2zM80 480h2v2h-2zM88 480h2v2h-2zM362 480h2v2h-2zM368 480h2v2h-2zM374 480h2v2h-2zM380 480h2v2h-2zM384 480h2v2h-2zM390 480h2v2h-2zM396 480h2v2h-2zM402 480h2v2h-2zM554 480h2v2h-2zM560 480h2v2h-2zM578 480h2v2h-2zM584 480h2v2h-2zM608 480h2v2h-2zM614 480h2v2h-2zM632 480h2v2h-2zM638 480h2v2h-2zM650 480h2v2h-2zM656 480h2v2h-2zM662 480h2v2h-2zM668 480h2v2h-2zM674 480h2v2h-2zM680 480h2v2h-2zM26 482h2v2h-2zM32 482h2v2h-2zM50 482h2v2h-2zM56 482h2v2h-2zM74 482h2v2h-2zM86 482h2v2h-2zM362 482h2v2h-2zM368 482h2v2h-2zM374 482h2v2h-2zM380 482h2v2h-2zM386 482h4v2h-4zM394 482h2v2h-2zM400 482h2v2h-2zM554 482h2v2h-2zM560 482h10v2h-10zM578 482h2v2h-2zM584 482h2v2h-2zM608 482h2v2h-2zM614 482h2v2h-2zM632 482h2v2h-2zM638 482h2v2h-2zM650 482h2v2h-2zM656 482h2v2h-2zM662 482h2v2h-2zM668 482h2v2h-2zM674 482h2v2h-2zM680 482h10v2h-10zM26 484h2v2h-2zM32 484h2v2h-2zM50 484h2v2h-2zM56 484h2v2h-2zM74 484h2v2h-2zM84 484h2v2h-2zM362 484h2v2h-2zM368 484h2v2h-2zM374 484h2v2h-2zM380 484h2v2h-2zM392 484h2v2h-2zM398 484h2v2h-2zM554 484h2v2h-2zM570 484h2v2h-2zM578 484h2v2h-2zM584 484h2v2h-2zM608 484h2v2h-2zM614 484h2v2h-2zM632 484h2v2h-2zM638 484h2v2h-2zM650 484h2v2h-2zM656 484h8v2h-8zM668 484h2v2h-2zM674 484h2v2h-2zM690 484h2v2h-2zM26 486h2v2h-2zM32 486h2v2h-2zM50 486h2v2h-2zM56 486h2v2h-2zM74 486h2v2h-2zM84 486h2v2h-2zM362 486h2v2h-2zM368 486h2v2h-2zM374 486h2v2h-2zM380 486h2v2h-2zM390 486h2v2h-2zM396 486h2v2h-2zM554 486h2v2h-2zM570 486h2v2h-2zM578 486h2v2h-2zM584 486h2v2h-2zM608 486h2v2h-2zM614 486h2v2h-2zM632 486h2v2h-2zM638 486h2v2h-2zM650 486h2v2h-2zM656 486h2v2h-2zM662 486h2v2h-2zM668 486h2v2h-2zM674 486h2v2h-2zM690 486h2v2h-2zM26 488h2v2h-2zM32 488h2v2h-2zM50 488h2v2h-2zM56 488h2v2h-2zM74 488h2v2h-2zM86 488h2v2h-2zM362 488h2v2h-2zM368 488h2v2h-2zM374 488h2v2h-2zM380 488h2v2h-2zM388 488h2v2h-2zM394 488h2v2h-2zM400 488h4v2h-4zM554 488h2v2h-2zM560 488h10v2h-10zM578 488h2v2h-2zM584 488h2v2h-2zM608 488h2v2h-2zM614 488h2v2h-2zM632 488h2v2h-2zM638 488h2v2h-2zM650 488h2v2h-2zM656 488h2v2h-2zM662 488h2v2h-2zM668 488h2v2h-2zM674 488h2v2h-2zM680 488h10v2h-10zM26 490h2v2h-2zM32 490h2v2h-2zM50 490h2v2h-2zM56 490h2v2h-2zM74 490h2v2h-2zM80 490h2v2h-2zM88 490h2v2h-2zM362 490h2v2h-2zM368 490h2v2h-2zM374 490h2v2h-2zM380 490h2v2h-2zM386 490h2v2h-2zM392 490h2v2h-2zM398 490h2v2h-2zM404 490h2v2h-2zM554 490h2v2h-2zM560 490h2v2h-2zM578 490h2v2h-2zM584 490h2v2h-2zM608 490h2v2h-2zM614 490h2v2h-2zM632 490h2v2h-2zM638 490h2v2h-2zM650 490h2v2h-2zM656 490h2v2h-2zM662 490h2v2h-2zM668 490h2v2h-2zM674 490h2v2h-2zM680 490h2v2h-2zM26 492h2v2h-2zM32 492h2v2h-2zM40 492h4v2h-4zM50 492h2v2h-2zM56 492h2v2h-2zM74 492h2v2h-2zM80 492h4v2h-4zM90 492h2v2h-2zM362 492h2v2h-2zM368 492h2v2h-2zM374 492h2v2h-2zM380 492h2v2h-2zM384 492h2v2h-2zM390 492h2v2h-2zM398 492h2v2h-2zM404 492h2v2h-2zM554 492h2v2h-2zM560 492h2v2h-2zM578 492h2v2h-2zM584 492h2v2h-2zM608 492h2v2h-2zM614 492h2v2h-2zM632 492h2v2h-2zM638 492h2v2h-2zM650 492h2v2h-2zM656 492h2v2h-2zM662 492h2v2h-2zM668 492h2v2h-2zM674 492h2v2h-2zM680 492h2v2h-2zM26 494h2v2h-2zM32 494h8v2h-8zM44 494h2v2h-2zM50 494h2v2h-2zM56 494h12v2h-12zM74 494h2v2h-2zM80 494h2v2h-2zM84 494h2v2h-2zM92 494h2v2h-2zM362 494h2v2h-2zM368 494h8v2h-8zM380 494h2v2h-2zM386 494h4v2h-4zM400 494h4v2h-4zM554 494h2v2h-2zM560 494h2v2h-2zM578 494h2v2h-2zM584 494h12v2h-12zM608 494h2v2h-2zM614 494h2v2h-2zM630 494h4v2h-4zM638 494h4v2h-4zM650 494h2v2h-2zM656 494h2v2h-2zM662 494h2v2h-2zM668 494h2v2h-2zM674 494h2v2h-2zM680 494h12v2h-12zM26 496h2v2h-2zM44 496h2v2h-2zM50 496h2v2h-2zM68 496h2v2h-2zM74 496h2v2h-2zM80 496h2v2h-2zM86 496h2v2h-2zM92 496h2v2h-2zM364 496h2v2h-2zM378 496h2v2h-2zM554 496h2v2h-2zM560 496h2v2h-2zM578 496h2v2h-2zM596 496h2v2h-2zM608 496h2v2h-2zM614 496h2v2h-2zM628 496h2v2h-2zM642 496h2v2h-2zM650 496h2v2h-2zM656 496h2v2h-2zM662 496h2v2h-2zM668 496h2v2h-2zM674 496h2v2h-2zM692 496h2v2h-2zM28 498h2v2h-2zM42 498h2v2h-2zM50 498h2v2h-2zM68 498h2v2h-2zM74 498h2v2h-2zM80 498h2v2h-2zM86 498h2v2h-2zM92 498h2v2h-2zM366 498h2v2h-2zM376 498h2v2h-2zM554 498h2v2h-2zM560 498h2v2h-2zM578 498h2v2h-2zM596 498h2v2h-2zM608 498h2v2h-2zM614 498h2v2h-2zM628 498h2v2h-2zM642 498h2v2h-2zM650 498h2v2h-2zM656 498h2v2h-2zM662 498h2v2h-2zM668 498h2v2h-2zM676 498h2v2h-2zM692 498h2v2h-2zM30 500h12v2h-12zM52 500h16v2h-16zM76 500h4v2h-4zM88 500h4v2h-4zM368 500h8v2h-8zM556 500h4v2h-4zM580 500h16v2h-16zM610 500h4v2h-4zM630 500h12v2h-12zM652 500h4v2h-4zM664 500h4v2h-4zM678 500h14v2h-14zM30 506h12v2h-12zM340 506h12v2h-12zM612 506h6v2h-6zM28 508h2v2h-2zM42 508h2v2h-2zM58 508h4v2h-4zM80 508h4v2h-4zM102 508h12v2h-12zM172 508h12v2h-12zM198 508h12v2h-12zM274 508h4v2h-4zM294 508h12v2h-12zM316 508h16v2h-16zM338 508h2v2h-2zM352 508h2v2h-2zM390 508h12v2h-12zM412 508h16v2h-16zM438 508h12v2h-12zM460 508h14v2h-14zM558 508h12v2h-12zM582 508h12v2h-12zM610 508h2v2h-2zM618 508h2v2h-2zM658 508h4v2h-4zM678 508h12v2h-12zM26 510h2v2h-2zM34 510h4v2h-4zM44 510h2v2h-2zM56 510h2v2h-2zM62 510h2v2h-2zM78 510h2v2h-2zM84 510h2v2h-2zM100 510h2v2h-2zM114 510h2v2h-2zM170 510h2v2h-2zM184 510h2v2h-2zM196 510h2v2h-2zM210 510h2v2h-2zM272 510h2v2h-2zM278 510h2v2h-2zM292 510h2v2h-2zM306 510h2v2h-2zM314 510h2v2h-2zM332 510h2v2h-2zM338 510h2v2h-2zM342 510h2v2h-2zM348 510h2v2h-2zM352 510h2v2h-2zM388 510h2v2h-2zM402 510h2v2h-2zM410 510h2v2h-2zM428 510h2v2h-2zM436 510h2v2h-2zM450 510h2v2h-2zM458 510h2v2h-2zM474 510h2v2h-2zM480 510h24v2h-24zM556 510h2v2h-2zM570 510h2v2h-2zM580 510h2v2h-2zM594 510h2v2h-2zM610 510h2v2h-2zM620 510h2v2h-2zM656 510h2v2h-2zM662 510h2v2h-2zM676 510h2v2h-2zM690 510h2v2h-2zM26 512h2v2h-2zM30 512h12v2h-12zM44 512h2v2h-2zM54 512h2v2h-2zM62 512h2v2h-2zM76 512h2v2h-2zM84 512h2v2h-2zM98 512h2v2h-2zM116 512h2v2h-2zM168 512h2v2h-2zM186 512h2v2h-2zM194 512h2v2h-2zM212 512h2v2h-2zM270 512h2v2h-2zM278 512h2v2h-2zM290 512h2v2h-2zM308 512h2v2h-2zM314 512h2v2h-2zM332 512h2v2h-2zM338 512h2v2h-2zM342 512h2v2h-2zM348 512h2v2h-2zM352 512h2v2h-2zM386 512h2v2h-2zM404 512h2v2h-2zM410 512h2v2h-2zM428 512h2v2h-2zM434 512h2v2h-2zM452 512h2v2h-2zM458 512h2v2h-2zM476 512h2v2h-2zM480 512h2v2h-2zM488 512h8v2h-8zM502 512h2v2h-2zM554 512h2v2h-2zM572 512h2v2h-2zM578 512h2v2h-2zM596 512h2v2h-2zM612 512h2v2h-2zM622 512h2v2h-2zM654 512h2v2h-2zM662 512h2v2h-2zM674 512h2v2h-2zM692 512h2v2h-2zM26 514h2v2h-2zM44 514h2v2h-2zM54 514h2v2h-2zM62 514h2v2h-2zM76 514h2v2h-2zM84 514h2v2h-2zM98 514h2v2h-2zM104 514h8v2h-8zM116 514h2v2h-2zM168 514h2v2h-2zM174 514h8v2h-8zM186 514h2v2h-2zM196 514h12v2h-12zM212 514h2v2h-2zM270 514h2v2h-2zM278 514h2v2h-2zM292 514h12v2h-12zM308 514h2v2h-2zM314 514h2v2h-2zM320 514h12v2h-12zM338 514h2v2h-2zM342 514h2v2h-2zM348 514h2v2h-2zM352 514h2v2h-2zM386 514h2v2h-2zM392 514h12v2h-12zM412 514h6v2h-6zM422 514h6v2h-6zM434 514h2v2h-2zM440 514h8v2h-8zM452 514h2v2h-2zM458 514h2v2h-2zM464 514h8v2h-8zM476 514h2v2h-2zM480 514h2v2h-2zM484 514h16v2h-16zM502 514h2v2h-2zM546 514h2v2h-2zM554 514h2v2h-2zM560 514h8v2h-8zM572 514h2v2h-2zM580 514h12v2h-12zM596 514h2v2h-2zM614 514h2v2h-2zM624 514h2v2h-2zM654 514h2v2h-2zM662 514h2v2h-2zM676 514h12v2h-12zM692 514h2v2h-2zM26 516h2v2h-2zM44 516h2v2h-2zM56 516h2v2h-2zM62 516h2v2h-2zM78 516h2v2h-2zM84 516h2v2h-2zM98 516h2v2h-2zM104 516h2v2h-2zM110 516h2v2h-2zM116 516h2v2h-2zM168 516h2v2h-2zM174 516h2v2h-2zM180 516h2v2h-2zM186 516h2v2h-2zM206 516h2v2h-2zM212 516h2v2h-2zM272 516h2v2h-2zM278 516h2v2h-2zM302 516h2v2h-2zM308 516h2v2h-2zM314 516h2v2h-2zM320 516h2v2h-2zM340 516h12v2h-12zM386 516h2v2h-2zM392 516h2v2h-2zM416 516h2v2h-2zM422 516h2v2h-2zM434 516h2v2h-2zM440 516h2v2h-2zM446 516h2v2h-2zM452 516h2v2h-2zM458 516h2v2h-2zM464 516h2v2h-2zM470 516h2v2h-2zM476 516h2v2h-2zM480 516h2v2h-2zM484 516h4v2h-4zM494 516h6v2h-6zM502 516h2v2h-2zM542 516h4v2h-4zM548 516h2v2h-2zM554 516h2v2h-2zM560 516h2v2h-2zM566 516h2v2h-2zM572 516h2v2h-2zM590 516h2v2h-2zM596 516h2v2h-2zM616 516h2v2h-2zM624 516h2v2h-2zM656 516h2v2h-2zM662 516h2v2h-2zM686 516h2v2h-2zM692 516h2v2h-2zM26 518h2v2h-2zM44 518h2v2h-2zM56 518h2v2h-2zM62 518h2v2h-2zM78 518h2v2h-2zM84 518h2v2h-2zM98 518h2v2h-2zM104 518h8v2h-8zM116 518h2v2h-2zM126 518h4v2h-4zM134 518h4v2h-4zM168 518h2v2h-2zM174 518h8v2h-8zM186 518h2v2h-2zM200 518h8v2h-8zM212 518h2v2h-2zM224 518h8v2h-8zM272 518h2v2h-2zM278 518h2v2h-2zM294 518h10v2h-10zM308 518h2v2h-2zM314 518h2v2h-2zM320 518h10v2h-10zM340 518h2v2h-2zM350 518h2v2h-2zM386 518h2v2h-2zM392 518h10v2h-10zM416 518h2v2h-2zM422 518h2v2h-2zM434 518h2v2h-2zM440 518h8v2h-8zM452 518h2v2h-2zM458 518h2v2h-2zM464 518h8v2h-8zM476 518h2v2h-2zM480 518h8v2h-8zM490 518h4v2h-4zM496 518h8v2h-8zM538 518h4v2h-4zM544 518h2v2h-2zM548 518h2v2h-2zM554 518h2v2h-2zM560 518h8v2h-8zM572 518h2v2h-2zM584 518h8v2h-8zM596 518h2v2h-2zM618 518h2v2h-2zM624 518h2v2h-2zM656 518h2v2h-2zM662 518h2v2h-2zM680 518h8v2h-8zM692 518h2v2h-2zM26 520h2v2h-2zM44 520h2v2h-2zM56 520h2v2h-2zM62 520h2v2h-2zM78 520h2v2h-2zM84 520h2v2h-2zM100 520h2v2h-2zM114 520h2v2h-2zM124 520h2v2h-2zM130 520h4v2h-4zM138 520h2v2h-2zM170 520h2v2h-2zM184 520h2v2h-2zM198 520h2v2h-2zM212 520h2v2h-2zM222 520h2v2h-2zM232 520h2v2h-2zM272 520h2v2h-2zM278 520h2v2h-2zM292 520h2v2h-2zM308 520h2v2h-2zM314 520h2v2h-2zM330 520h2v2h-2zM338 520h2v2h-2zM344 520h4v2h-4zM352 520h2v2h-2zM386 520h2v2h-2zM402 520h2v2h-2zM416 520h2v2h-2zM422 520h2v2h-2zM434 520h2v2h-2zM452 520h2v2h-2zM458 520h2v2h-2zM474 520h2v2h-2zM480 520h8v2h-8zM490 520h6v2h-6zM498 520h6v2h-6zM534 520h4v2h-4zM540 520h2v2h-2zM544 520h2v2h-2zM548 520h2v2h-2zM554 520h2v2h-2zM572 520h2v2h-2zM582 520h2v2h-2zM596 520h2v2h-2zM620 520h4v2h-4zM626 520h6v2h-6zM656 520h2v2h-2zM662 520h2v2h-2zM678 520h2v2h-2zM692 520h2v2h-2zM26 522h2v2h-2zM44 522h2v2h-2zM56 522h2v2h-2zM62 522h2v2h-2zM78 522h2v2h-2zM84 522h2v2h-2zM98 522h2v2h-2zM116 522h2v2h-2zM124 522h2v2h-2zM130 522h4v2h-4zM138 522h2v2h-2zM168 522h2v2h-2zM186 522h2v2h-2zM198 522h2v2h-2zM212 522h2v2h-2zM220 522h2v2h-2zM234 522h2v2h-2zM272 522h2v2h-2zM278 522h2v2h-2zM290 522h2v2h-2zM308 522h2v2h-2zM314 522h2v2h-2zM332 522h2v2h-2zM338 522h2v2h-2zM352 522h2v2h-2zM388 522h2v2h-2zM404 522h2v2h-2zM416 522h2v2h-2zM422 522h2v2h-2zM434 522h2v2h-2zM452 522h2v2h-2zM458 522h2v2h-2zM474 522h2v2h-2zM480 522h8v2h-8zM490 522h6v2h-6zM498 522h6v2h-6zM530 522h4v2h-4zM536 522h2v2h-2zM540 522h2v2h-2zM544 522h2v2h-2zM548 522h2v2h-2zM556 522h2v2h-2zM572 522h2v2h-2zM582 522h2v2h-2zM596 522h2v2h-2zM624 522h2v2h-2zM632 522h2v2h-2zM656 522h2v2h-2zM662 522h2v2h-2zM678 522h2v2h-2zM692 522h2v2h-2zM26 524h2v2h-2zM44 524h2v2h-2zM56 524h2v2h-2zM62 524h2v2h-2zM78 524h2v2h-2zM84 524h2v2h-2zM98 524h2v2h-2zM104 524h8v2h-8zM116 524h2v2h-2zM124 524h2v2h-2zM130 524h4v2h-4zM138 524h2v2h-2zM168 524h2v2h-2zM174 524h8v2h-8zM186 524h2v2h-2zM200 524h8v2h-8zM212 524h2v2h-2zM220 524h2v2h-2zM226 524h4v2h-4zM234 524h2v2h-2zM272 524h2v2h-2zM278 524h2v2h-2zM290 524h2v2h-2zM296 524h12v2h-12zM316 524h12v2h-12zM332 524h2v2h-2zM338 524h2v2h-2zM344 524h4v2h-4zM352 524h2v2h-2zM390 524h10v2h-10zM404 524h2v2h-2zM416 524h2v2h-2zM422 524h2v2h-2zM434 524h2v2h-2zM440 524h8v2h-8zM452 524h2v2h-2zM458 524h2v2h-2zM464 524h8v2h-8zM476 524h2v2h-2zM480 524h8v2h-8zM490 524h6v2h-6zM498 524h6v2h-6zM528 524h2v2h-2zM532 524h2v2h-2zM536 524h2v2h-2zM540 524h2v2h-2zM544 524h2v2h-2zM548 524h2v2h-2zM558 524h10v2h-10zM572 524h2v2h-2zM584 524h8v2h-8zM596 524h2v2h-2zM608 524h4v2h-4zM618 524h2v2h-2zM624 524h2v2h-2zM634 524h2v2h-2zM656 524h2v2h-2zM662 524h2v2h-2zM680 524h8v2h-8zM692 524h2v2h-2zM26 526h2v2h-2zM44 526h2v2h-2zM56 526h2v2h-2zM62 526h2v2h-2zM78 526h2v2h-2zM84 526h2v2h-2zM98 526h2v2h-2zM104 526h2v2h-2zM110 526h2v2h-2zM116 526h2v2h-2zM124 526h2v2h-2zM130 526h4v2h-4zM138 526h2v2h-2zM168 526h2v2h-2zM174 526h2v2h-2zM180 526h2v2h-2zM186 526h2v2h-2zM206 526h2v2h-2zM212 526h2v2h-2zM220 526h2v2h-2zM226 526h4v2h-4zM234 526h2v2h-2zM272 526h2v2h-2zM278 526h2v2h-2zM290 526h2v2h-2zM296 526h2v2h-2zM326 526h2v2h-2zM332 526h2v2h-2zM340 526h4v2h-4zM348 526h4v2h-4zM398 526h2v2h-2zM404 526h2v2h-2zM416 526h2v2h-2zM422 526h2v2h-2zM434 526h2v2h-2zM440 526h2v2h-2zM446 526h2v2h-2zM452 526h2v2h-2zM458 526h2v2h-2zM464 526h2v2h-2zM470 526h2v2h-2zM476 526h2v2h-2zM480 526h8v2h-8zM490 526h6v2h-6zM498 526h6v2h-6zM530 526h2v2h-2zM534 526h2v2h-2zM538 526h2v2h-2zM542 526h2v2h-2zM546 526h2v2h-2zM566 526h2v2h-2zM572 526h2v2h-2zM590 526h2v2h-2zM596 526h2v2h-2zM606 526h2v2h-2zM612 526h2v2h-2zM616 526h2v2h-2zM620 526h2v2h-2zM626 526h2v2h-2zM636 526h2v2h-2zM656 526h2v2h-2zM662 526h2v2h-2zM686 526h2v2h-2zM692 526h2v2h-2zM26 528h2v2h-2zM44 528h2v2h-2zM56 528h2v2h-2zM62 528h2v2h-2zM78 528h2v2h-2zM84 528h2v2h-2zM98 528h2v2h-2zM104 528h2v2h-2zM110 528h2v2h-2zM116 528h2v2h-2zM124 528h2v2h-2zM130 528h4v2h-4zM138 528h2v2h-2zM168 528h2v2h-2zM174 528h2v2h-2zM180 528h2v2h-2zM186 528h2v2h-2zM206 528h2v2h-2zM212 528h2v2h-2zM220 528h2v2h-2zM234 528h2v2h-2zM272 528h2v2h-2zM278 528h2v2h-2zM290 528h2v2h-2zM296 528h2v2h-2zM326 528h2v2h-2zM332 528h2v2h-2zM338 528h2v2h-2zM344 528h8v2h-8zM398 528h2v2h-2zM404 528h2v2h-2zM416 528h2v2h-2zM422 528h2v2h-2zM434 528h2v2h-2zM440 528h2v2h-2zM446 528h2v2h-2zM452 528h2v2h-2zM458 528h2v2h-2zM464 528h2v2h-2zM470 528h2v2h-2zM476 528h2v2h-2zM480 528h8v2h-8zM490 528h4v2h-4zM496 528h8v2h-8zM566 528h2v2h-2zM572 528h2v2h-2zM590 528h2v2h-2zM596 528h2v2h-2zM606 528h2v2h-2zM612 528h4v2h-4zM618 528h2v2h-2zM628 528h2v2h-2zM638 528h2v2h-2zM656 528h2v2h-2zM662 528h2v2h-2zM686 528h2v2h-2zM692 528h2v2h-2zM26 530h2v2h-2zM44 530h2v2h-2zM56 530h2v2h-2zM62 530h2v2h-2zM78 530h2v2h-2zM84 530h2v2h-2zM90 530h4v2h-4zM98 530h2v2h-2zM104 530h8v2h-8zM116 530h2v2h-2zM126 530h2v2h-2zM136 530h2v2h-2zM168 530h2v2h-2zM174 530h8v2h-8zM186 530h6v2h-6zM196 530h12v2h-12zM212 530h2v2h-2zM220 530h2v2h-2zM234 530h2v2h-2zM272 530h2v2h-2zM278 530h2v2h-2zM290 530h2v2h-2zM296 530h12v2h-12zM316 530h12v2h-12zM332 530h2v2h-2zM338 530h2v2h-2zM352 530h2v2h-2zM388 530h12v2h-12zM404 530h2v2h-2zM416 530h2v2h-2zM422 530h2v2h-2zM434 530h2v2h-2zM440 530h2v2h-2zM446 530h2v2h-2zM452 530h2v2h-2zM458 530h2v2h-2zM464 530h8v2h-8zM476 530h2v2h-2zM480 530h2v2h-2zM484 530h4v2h-4zM494 530h6v2h-6zM502 530h2v2h-2zM556 530h12v2h-12zM572 530h2v2h-2zM580 530h12v2h-12zM596 530h2v2h-2zM608 530h6v2h-6zM616 530h2v2h-2zM630 530h2v2h-2zM638 530h2v2h-2zM656 530h2v2h-2zM662 530h2v2h-2zM676 530h12v2h-12zM692 530h2v2h-2zM26 532h2v2h-2zM44 532h2v2h-2zM54 532h2v2h-2zM64 532h2v2h-2zM76 532h2v2h-2zM86 532h4v2h-4zM94 532h2v2h-2zM98 532h2v2h-2zM116 532h2v2h-2zM128 532h2v2h-2zM134 532h2v2h-2zM168 532h2v2h-2zM186 532h2v2h-2zM192 532h4v2h-4zM212 532h2v2h-2zM220 532h2v2h-2zM226 532h4v2h-4zM234 532h2v2h-2zM270 532h2v2h-2zM280 532h2v2h-2zM290 532h2v2h-2zM308 532h2v2h-2zM314 532h2v2h-2zM332 532h2v2h-2zM338 532h2v2h-2zM344 532h4v2h-4zM352 532h2v2h-2zM386 532h2v2h-2zM404 532h2v2h-2zM416 532h2v2h-2zM422 532h2v2h-2zM434 532h2v2h-2zM440 532h2v2h-2zM446 532h2v2h-2zM452 532h2v2h-2zM458 532h2v2h-2zM476 532h2v2h-2zM480 532h2v2h-2zM484 532h16v2h-16zM502 532h2v2h-2zM554 532h2v2h-2zM572 532h2v2h-2zM578 532h2v2h-2zM596 532h2v2h-2zM614 532h6v2h-6zM632 532h2v2h-2zM638 532h2v2h-2zM654 532h2v2h-2zM664 532h2v2h-2zM674 532h2v2h-2zM692 532h2v2h-2zM26 534h2v2h-2zM44 534h2v2h-2zM54 534h2v2h-2zM64 534h2v2h-2zM76 534h2v2h-2zM86 534h4v2h-4zM94 534h2v2h-2zM100 534h2v2h-2zM114 534h2v2h-2zM130 534h4v2h-4zM170 534h2v2h-2zM184 534h4v2h-4zM192 534h2v2h-2zM196 534h2v2h-2zM210 534h2v2h-2zM220 534h2v2h-2zM226 534h4v2h-4zM234 534h2v2h-2zM270 534h2v2h-2zM280 534h2v2h-2zM290 534h2v2h-2zM308 534h2v2h-2zM314 534h2v2h-2zM330 534h2v2h-2zM338 534h2v2h-2zM344 534h4v2h-4zM352 534h2v2h-2zM388 534h2v2h-2zM402 534h2v2h-2zM416 534h2v2h-2zM422 534h2v2h-2zM434 534h2v2h-2zM440 534h2v2h-2zM446 534h2v2h-2zM452 534h2v2h-2zM458 534h2v2h-2zM474 534h2v2h-2zM480 534h2v2h-2zM488 534h8v2h-8zM502 534h2v2h-2zM556 534h2v2h-2zM570 534h2v2h-2zM580 534h2v2h-2zM594 534h2v2h-2zM614 534h2v2h-2zM620 534h2v2h-2zM634 534h4v2h-4zM654 534h2v2h-2zM664 534h2v2h-2zM676 534h2v2h-2zM690 534h2v2h-2zM26 536h2v2h-2zM44 536h2v2h-2zM56 536h8v2h-8zM78 536h8v2h-8zM90 536h4v2h-4zM102 536h12v2h-12zM172 536h12v2h-12zM188 536h4v2h-4zM198 536h12v2h-12zM222 536h4v2h-4zM230 536h4v2h-4zM272 536h8v2h-8zM292 536h16v2h-16zM316 536h14v2h-14zM340 536h4v2h-4zM348 536h4v2h-4zM390 536h12v2h-12zM418 536h4v2h-4zM436 536h4v2h-4zM448 536h4v2h-4zM460 536h14v2h-14zM480 536h24v2h-24zM558 536h12v2h-12zM582 536h12v2h-12zM614 536h2v2h-2zM620 536h2v2h-2zM656 536h8v2h-8zM678 536h12v2h-12zM28 538h16v2h-16zM616 538h4v2h-4z" fill="#000"/>
<path d="M30 6h12v2h-12zM54 6h12v2h-12zM76 6h14v2h-14zM102 6h14v2h-14zM126 6h14v2h-14zM148 6h12v2h-12zM346 6h4v2h-4zM368 6h8v2h-8zM394 6h4v2h-4zM610 6h4v2h-4zM634 6h4v2h-4zM650 6h4v2h-4zM658 6h2v2h-2zM666 6h2v2h-2zM28 8h16v2h-16zM52 8h16v2h-16zM76 8h16v2h-16zM100 8h16v2h-16zM124 8h16v2h-16zM148 8h14v2h-14zM280 8h2v2h-2zM298 8h4v2h-4zM344 8h6v2h-6zM366 8h12v2h-12zM392 8h6v2h-6zM608 8h6v2h-6zM632 8h6v2h-6zM648 8h2v2h-2zM654 8h2v2h-2zM658 8h2v2h-2zM664 8h6v2h-6zM28 10h4v2h-4zM40 10h4v2h-4zM52 10h4v2h-4zM76 10h4v2h-4zM88 10h4v2h-4zM100 10h4v2h-4zM124 10h4v2h-4zM148 10h4v2h-4zM158 10h6v2h-6zM274 10h2v2h-2zM280 10h2v2h-2zM296 10h8v2h-8zM344 10h6v2h-6zM364 10h4v2h-4zM376 10h4v2h-4zM392 10h6v2h-6zM608 10h6v2h-6zM632 10h6v2h-6zM648 10h8v2h-8zM658 10h2v2h-2zM666 10h2v2h-2zM28 12h4v2h-4zM40 12h4v2h-4zM52 12h4v2h-4zM76 12h4v2h-4zM88 12h4v2h-4zM100 12h4v2h-4zM124 12h4v2h-4zM148 12h4v2h-4zM160 12h4v2h-4zM272 12h6v2h-6zM280 12h2v2h-2zM296 12h8v2h-8zM346 12h4v2h-4zM364 12h4v2h-4zM376 12h4v2h-4zM394 12h4v2h-4zM610 12h4v2h-4zM634 12h4v2h-4zM648 12h2v2h-2zM654 12h2v2h-2zM658 12h2v2h-2zM666 12h2v2h-2zM28 14h4v2h-4zM40 14h4v2h-4zM52 14h4v2h-4zM76 14h4v2h-4zM88 14h4v2h-4zM100 14h4v2h-4zM124 14h4v2h-4zM148 14h4v2h-4zM160 14h4v2h-4zM270 14h12v2h-12zM294 14h12v2h-12zM346 14h4v2h-4zM364 14h4v2h-4zM376 14h4v2h-4zM394 14h4v2h-4zM610 14h4v2h-4zM634 14h4v2h-4zM648 14h2v2h-2zM654 14h2v2h-2zM658 14h2v2h-2zM666 14h4v2h-4zM28 16h16v2h-16zM52 16h14v2h-14zM76 16h16v2h-16zM100 16h14v2h-14zM124 16h14v2h-14zM148 16h4v2h-4zM160 16h4v2h-4zM268 16h16v2h-16zM294 16h12v2h-12zM346 16h4v2h-4zM364 16h4v2h-4zM376 16h4v2h-4zM394 16h4v2h-4zM610 16h4v2h-4zM634 16h4v2h-4zM28 18h16v2h-16zM54 18h14v2h-14zM76 18h14v2h-14zM100 18h14v2h-14zM124 18h14v2h-14zM148 18h4v2h-4zM160 18h4v2h-4zM266 18h20v2h-20zM292 18h16v2h-16zM346 18h4v2h-4zM364 18h4v2h-4zM376 18h4v2h-4zM394 18h4v2h-4zM610 18h4v2h-4zM634 18h4v2h-4zM28 20h4v2h-4zM40 20h4v2h-4zM64 20h4v2h-4zM76 20h4v2h-4zM100 20h4v2h-4zM124 20h4v2h-4zM148 20h4v2h-4zM160 20h4v2h-4zM268 20h16v2h-16zM292 20h6v2h-6zM302 20h6v2h-6zM346 20h4v2h-4zM364 20h4v2h-4zM376 20h4v2h-4zM394 20h4v2h-4zM412 20h14v2h-14zM610 20h4v2h-4zM634 20h4v2h-4zM652 20h12v2h-12zM28 22h4v2h-4zM40 22h4v2h-4zM64 22h4v2h-4zM76 22h4v2h-4zM100 22h4v2h-4zM124 22h4v2h-4zM148 22h4v2h-4zM160 22h4v2h-4zM268 22h6v2h-6zM278 22h6v2h-6zM290 22h6v2h-6zM304 22h6v2h-6zM346 22h4v2h-4zM364 22h4v2h-4zM376 22h4v2h-4zM394 22h4v2h-4zM412 22h2v2h-2zM416 22h4v2h-4zM422 22h4v2h-4zM610 22h4v2h-4zM634 22h4v2h-4zM652 22h2v2h-2zM656 22h4v2h-4zM662 22h2v2h-2zM28 24h4v2h-4zM40 24h4v2h-4zM64 24h4v2h-4zM76 24h4v2h-4zM100 24h4v2h-4zM124 24h4v2h-4zM148 24h4v2h-4zM160 24h4v2h-4zM268 24h6v2h-6zM278 24h6v2h-6zM290 24h4v2h-4zM306 24h4v2h-4zM346 24h4v2h-4zM364 24h4v2h-4zM376 24h4v2h-4zM394 24h4v2h-4zM412 24h2v2h-2zM416 24h4v2h-4zM422 24h4v2h-4zM610 24h4v2h-4zM634 24h4v2h-4zM652 24h2v2h-2zM656 24h4v2h-4zM662 24h2v2h-2zM28 26h4v2h-4zM40 26h4v2h-4zM64 26h4v2h-4zM76 26h4v2h-4zM100 26h4v2h-4zM124 26h4v2h-4zM148 26h4v2h-4zM158 26h6v2h-6zM268 26h6v2h-6zM278 26h6v2h-6zM288 26h6v2h-6zM306 26h6v2h-6zM346 26h4v2h-4zM364 26h4v2h-4zM376 26h4v2h-4zM394 26h4v2h-4zM412 26h2v2h-2zM416 26h4v2h-4zM422 26h4v2h-4zM610 26h4v2h-4zM634 26h4v2h-4zM652 26h2v2h-2zM656 26h4v2h-4zM662 26h2v2h-2zM28 28h4v2h-4zM40 28h4v2h-4zM52 28h16v2h-16zM76 28h4v2h-4zM100 28h16v2h-16zM124 28h16v2h-16zM148 28h14v2h-14zM268 28h16v2h-16zM344 28h8v2h-8zM366 28h12v2h-12zM392 28h8v2h-8zM412 28h2v2h-2zM416 28h4v2h-4zM422 28h4v2h-4zM608 28h8v2h-8zM632 28h8v2h-8zM28 30h4v2h-4zM40 30h4v2h-4zM54 30h12v2h-12zM76 30h4v2h-4zM102 30h14v2h-14zM126 30h14v2h-14zM148 30h12v2h-12zM344 30h8v2h-8zM368 30h8v2h-8zM392 30h8v2h-8zM412 30h2v2h-2zM416 30h4v2h-4zM422 30h4v2h-4zM608 30h8v2h-8zM632 30h8v2h-8zM28 38h8v2h-8zM26 40h4v2h-4zM34 40h4v2h-4zM26 42h4v2h-4zM58 42h4v2h-4zM106 42h4v2h-4zM124 42h16v2h-16zM146 42h2v2h-2zM26 44h4v2h-4zM32 44h6v2h-6zM56 44h8v2h-8zM104 44h6v2h-6zM124 44h16v2h-16zM146 44h2v2h-2zM152 44h2v2h-2zM156 44h8v2h-8zM26 46h4v2h-4zM34 46h4v2h-4zM56 46h8v2h-8zM104 46h6v2h-6zM136 46h4v2h-4zM146 46h2v2h-2zM150 46h2v2h-2zM156 46h2v2h-2zM160 46h2v2h-2zM164 46h2v2h-2zM26 48h4v2h-4zM34 48h4v2h-4zM54 48h12v2h-12zM106 48h4v2h-4zM134 48h6v2h-6zM146 48h4v2h-4zM156 48h2v2h-2zM160 48h2v2h-2zM164 48h2v2h-2zM26 50h12v2h-12zM54 50h4v2h-4zM62 50h4v2h-4zM106 50h4v2h-4zM132 50h6v2h-6zM146 50h2v2h-2zM150 50h2v2h-2zM156 50h2v2h-2zM160 50h2v2h-2zM164 50h2v2h-2zM28 52h8v2h-8zM52 52h6v2h-6zM62 52h6v2h-6zM106 52h4v2h-4zM130 52h6v2h-6zM146 52h2v2h-2zM152 52h2v2h-2zM156 52h2v2h-2zM160 52h2v2h-2zM164 52h2v2h-2zM52 54h4v2h-4zM64 54h4v2h-4zM106 54h4v2h-4zM130 54h4v2h-4zM36 56h10v2h-10zM50 56h6v2h-6zM64 56h6v2h-6zM106 56h4v2h-4zM128 56h6v2h-6zM146 56h20v2h-20zM34 58h4v2h-4zM50 58h4v2h-4zM66 58h4v2h-4zM106 58h4v2h-4zM128 58h4v2h-4zM34 60h4v2h-4zM48 60h6v2h-6zM66 60h6v2h-6zM106 60h4v2h-4zM128 60h4v2h-4zM154 60h2v2h-2zM36 62h8v2h-8zM106 62h4v2h-4zM128 62h4v2h-4zM154 62h2v2h-2zM42 64h4v2h-4zM104 64h8v2h-8zM128 64h4v2h-4zM154 64h8v2h-8zM42 66h4v2h-4zM104 66h8v2h-8zM128 66h4v2h-4zM154 66h2v2h-2zM160 66h2v2h-2zM34 68h10v2h-10zM154 68h2v2h-2zM160 68h2v2h-2zM346 220h4v2h-4zM346 222h4v2h-4zM656 222h8v2h-8zM676 222h14v2h-14zM654 224h12v2h-12zM676 224h2v2h-2zM680 224h4v2h-4zM686 224h4v2h-4zM652 226h4v2h-4zM664 226h4v2h-4zM676 226h2v2h-2zM680 226h4v2h-4zM686 226h4v2h-4zM652 228h4v2h-4zM664 228h4v2h-4zM676 228h2v2h-2zM680 228h4v2h-4zM686 228h4v2h-4zM344 230h8v2h-8zM652 230h4v2h-4zM664 230h4v2h-4zM246 232h10v2h-10zM270 232h10v2h-10zM294 232h10v2h-10zM328 232h4v2h-4zM336 232h4v2h-4zM344 232h2v2h-2zM350 232h2v2h-2zM356 232h4v2h-4zM364 232h4v2h-4zM390 232h10v2h-10zM414 232h10v2h-10zM438 232h10v2h-10zM652 232h4v2h-4zM664 232h4v2h-4zM674 232h18v2h-18zM246 234h10v2h-10zM270 234h10v2h-10zM294 234h10v2h-10zM328 234h4v2h-4zM336 234h4v2h-4zM344 234h2v2h-2zM350 234h2v2h-2zM356 234h4v2h-4zM364 234h4v2h-4zM390 234h10v2h-10zM414 234h10v2h-10zM438 234h10v2h-10zM652 234h4v2h-4zM664 234h4v2h-4zM344 236h8v2h-8zM652 236h4v2h-4zM664 236h4v2h-4zM678 236h12v2h-12zM652 238h4v2h-4zM664 238h4v2h-4zM676 238h4v2h-4zM652 240h4v2h-4zM664 240h4v2h-4zM678 240h10v2h-10zM610 242h4v2h-4zM652 242h4v2h-4zM664 242h4v2h-4zM686 242h4v2h-4zM346 244h4v2h-4zM608 244h8v2h-8zM654 244h12v2h-12zM676 244h12v2h-12zM346 246h4v2h-4zM606 246h12v2h-12zM656 246h8v2h-8zM604 248h16v2h-16zM28 402h4v2h-4zM40 402h4v2h-4zM54 402h14v2h-14zM78 402h12v2h-12zM102 402h12v2h-12zM126 402h12v2h-12zM150 402h12v2h-12zM174 402h14v2h-14zM28 404h6v2h-6zM38 404h6v2h-6zM52 404h16v2h-16zM76 404h16v2h-16zM100 404h16v2h-16zM124 404h16v2h-16zM148 404h16v2h-16zM172 404h16v2h-16zM28 406h16v2h-16zM52 406h4v2h-4zM76 406h4v2h-4zM100 406h4v2h-4zM124 406h4v2h-4zM136 406h4v2h-4zM148 406h4v2h-4zM160 406h4v2h-4zM172 406h4v2h-4zM28 408h4v2h-4zM34 408h4v2h-4zM40 408h4v2h-4zM52 408h4v2h-4zM76 408h4v2h-4zM100 408h4v2h-4zM124 408h4v2h-4zM136 408h4v2h-4zM148 408h4v2h-4zM172 408h4v2h-4zM28 410h4v2h-4zM34 410h4v2h-4zM40 410h4v2h-4zM52 410h4v2h-4zM76 410h4v2h-4zM100 410h4v2h-4zM124 410h4v2h-4zM136 410h4v2h-4zM148 410h4v2h-4zM172 410h4v2h-4zM28 412h4v2h-4zM40 412h4v2h-4zM52 412h14v2h-14zM76 412h14v2h-14zM100 412h14v2h-14zM124 412h16v2h-16zM148 412h4v2h-4zM172 412h14v2h-14zM28 414h4v2h-4zM40 414h4v2h-4zM52 414h14v2h-14zM78 414h14v2h-14zM102 414h14v2h-14zM124 414h16v2h-16zM148 414h4v2h-4zM156 414h8v2h-8zM172 414h14v2h-14zM28 416h4v2h-4zM40 416h4v2h-4zM52 416h4v2h-4zM88 416h4v2h-4zM112 416h4v2h-4zM124 416h4v2h-4zM136 416h4v2h-4zM148 416h4v2h-4zM156 416h8v2h-8zM172 416h4v2h-4zM28 418h4v2h-4zM40 418h4v2h-4zM52 418h4v2h-4zM88 418h4v2h-4zM112 418h4v2h-4zM124 418h4v2h-4zM136 418h4v2h-4zM148 418h4v2h-4zM160 418h4v2h-4zM172 418h4v2h-4zM28 420h4v2h-4zM40 420h4v2h-4zM52 420h4v2h-4zM88 420h4v2h-4zM112 420h4v2h-4zM124 420h4v2h-4zM136 420h4v2h-4zM148 420h4v2h-4zM160 420h4v2h-4zM172 420h4v2h-4zM28 422h4v2h-4zM40 422h4v2h-4zM52 422h4v2h-4zM88 422h4v2h-4zM112 422h4v2h-4zM124 422h4v2h-4zM136 422h4v2h-4zM148 422h4v2h-4zM160 422h4v2h-4zM172 422h4v2h-4zM28 424h4v2h-4zM40 424h4v2h-4zM52 424h16v2h-16zM76 424h16v2h-16zM100 424h16v2h-16zM124 424h4v2h-4zM136 424h4v2h-4zM148 424h16v2h-16zM172 424h16v2h-16zM28 426h4v2h-4zM40 426h4v2h-4zM54 426h14v2h-14zM78 426h12v2h-12zM102 426h12v2h-12zM124 426h4v2h-4zM136 426h4v2h-4zM150 426h12v2h-12zM174 426h14v2h-14zM30 474h12v2h-12zM52 474h4v2h-4zM76 474h4v2h-4zM88 474h4v2h-4zM368 474h8v2h-8zM556 474h16v2h-16zM580 474h4v2h-4zM604 474h16v2h-16zM630 474h12v2h-12zM652 474h4v2h-4zM664 474h4v2h-4zM678 474h14v2h-14zM28 476h16v2h-16zM52 476h4v2h-4zM76 476h4v2h-4zM86 476h6v2h-6zM366 476h12v2h-12zM556 476h16v2h-16zM580 476h4v2h-4zM604 476h16v2h-16zM630 476h12v2h-12zM652 476h6v2h-6zM662 476h6v2h-6zM676 476h16v2h-16zM28 478h4v2h-4zM40 478h4v2h-4zM52 478h4v2h-4zM76 478h4v2h-4zM84 478h6v2h-6zM364 478h4v2h-4zM376 478h4v2h-4zM386 478h4v2h-4zM400 478h4v2h-4zM556 478h4v2h-4zM580 478h4v2h-4zM610 478h4v2h-4zM634 478h4v2h-4zM652 478h16v2h-16zM676 478h4v2h-4zM28 480h4v2h-4zM52 480h4v2h-4zM76 480h4v2h-4zM82 480h6v2h-6zM364 480h4v2h-4zM376 480h4v2h-4zM386 480h4v2h-4zM398 480h4v2h-4zM556 480h4v2h-4zM580 480h4v2h-4zM610 480h4v2h-4zM634 480h4v2h-4zM652 480h4v2h-4zM658 480h4v2h-4zM664 480h4v2h-4zM676 480h4v2h-4zM28 482h4v2h-4zM52 482h4v2h-4zM76 482h10v2h-10zM364 482h4v2h-4zM376 482h4v2h-4zM396 482h4v2h-4zM556 482h4v2h-4zM580 482h4v2h-4zM610 482h4v2h-4zM634 482h4v2h-4zM652 482h4v2h-4zM658 482h4v2h-4zM664 482h4v2h-4zM676 482h4v2h-4zM28 484h4v2h-4zM52 484h4v2h-4zM76 484h8v2h-8zM364 484h4v2h-4zM376 484h4v2h-4zM394 484h4v2h-4zM556 484h14v2h-14zM580 484h4v2h-4zM610 484h4v2h-4zM634 484h4v2h-4zM652 484h4v2h-4zM664 484h4v2h-4zM676 484h14v2h-14zM28 486h4v2h-4zM52 486h4v2h-4zM76 486h8v2h-8zM364 486h4v2h-4zM376 486h4v2h-4zM392 486h4v2h-4zM556 486h14v2h-14zM580 486h4v2h-4zM610 486h4v2h-4zM634 486h4v2h-4zM652 486h4v2h-4zM664 486h4v2h-4zM676 486h14v2h-14zM28 488h4v2h-4zM52 488h4v2h-4zM76 488h10v2h-10zM364 488h4v2h-4zM376 488h4v2h-4zM390 488h4v2h-4zM556 488h4v2h-4zM580 488h4v2h-4zM610 488h4v2h-4zM634 488h4v2h-4zM652 488h4v2h-4zM664 488h4v2h-4zM676 488h4v2h-4zM28 490h4v2h-4zM52 490h4v2h-4zM76 490h4v2h-4zM82 490h6v2h-6zM364 490h4v2h-4zM376 490h4v2h-4zM388 490h4v2h-4zM400 490h4v2h-4zM556 490h4v2h-4zM580 490h4v2h-4zM610 490h4v2h-4zM634 490h4v2h-4zM652 490h4v2h-4zM664 490h4v2h-4zM676 490h4v2h-4zM28 492h4v2h-4zM52 492h4v2h-4zM76 492h4v2h-4zM84 492h6v2h-6zM364 492h4v2h-4zM376 492h4v2h-4zM386 492h4v2h-4zM400 492h4v2h-4zM556 492h4v2h-4zM580 492h4v2h-4zM610 492h4v2h-4zM634 492h4v2h-4zM652 492h4v2h-4zM664 492h4v2h-4zM676 492h4v2h-4zM28 494h4v2h-4zM40 494h4v2h-4zM52 494h4v2h-4zM76 494h4v2h-4zM86 494h6v2h-6zM364 494h4v2h-4zM376 494h4v2h-4zM556 494h4v2h-4zM580 494h4v2h-4zM610 494h4v2h-4zM634 494h4v2h-4zM652 494h4v2h-4zM664 494h4v2h-4zM676 494h4v2h-4zM28 496h16v2h-16zM52 496h16v2h-16zM76 496h4v2h-4zM88 496h4v2h-4zM366 496h12v2h-12zM556 496h4v2h-4zM580 496h16v2h-16zM610 496h4v2h-4zM630 496h12v2h-12zM652 496h4v2h-4zM664 496h4v2h-4zM676 496h16v2h-16zM30 498h12v2h-12zM52 498h16v2h-16zM76 498h4v2h-4zM88 498h4v2h-4zM368 498h8v2h-8zM556 498h4v2h-4zM580 498h16v2h-16zM610 498h4v2h-4zM630 498h12v2h-12zM652 498h4v2h-4zM664 498h4v2h-4zM678 498h14v2h-14zM30 508h12v2h-12zM340 508h12v2h-12zM612 508h6v2h-6zM28 510h6v2h-6zM38 510h6v2h-6zM58 510h4v2h-4zM80 510h4v2h-4zM102 510h12v2h-12zM172 510h12v2h-12zM198 510h12v2h-12zM274 510h4v2h-4zM294 510h12v2h-12zM316 510h16v2h-16zM340 510h2v2h-2zM344 510h4v2h-4zM350 510h2v2h-2zM390 510h12v2h-12zM412 510h16v2h-16zM438 510h12v2h-12zM460 510h14v2h-14zM558 510h12v2h-12zM582 510h12v2h-12zM612 510h8v2h-8zM658 510h4v2h-4zM678 510h12v2h-12zM28 512h2v2h-2zM42 512h2v2h-2zM56 512h6v2h-6zM78 512h6v2h-6zM100 512h16v2h-16zM170 512h16v2h-16zM196 512h16v2h-16zM272 512h6v2h-6zM292 512h16v2h-16zM316 512h16v2h-16zM340 512h2v2h-2zM344 512h4v2h-4zM350 512h2v2h-2zM388 512h16v2h-16zM412 512h16v2h-16zM436 512h16v2h-16zM460 512h16v2h-16zM482 512h6v2h-6zM496 512h6v2h-6zM556 512h16v2h-16zM580 512h16v2h-16zM614 512h8v2h-8zM656 512h6v2h-6zM676 512h16v2h-16zM28 514h16v2h-16zM56 514h6v2h-6zM78 514h6v2h-6zM100 514h4v2h-4zM112 514h4v2h-4zM170 514h4v2h-4zM182 514h4v2h-4zM208 514h4v2h-4zM272 514h6v2h-6zM304 514h4v2h-4zM316 514h4v2h-4zM340 514h2v2h-2zM344 514h4v2h-4zM350 514h2v2h-2zM388 514h4v2h-4zM418 514h4v2h-4zM436 514h4v2h-4zM448 514h4v2h-4zM460 514h4v2h-4zM472 514h4v2h-4zM482 514h2v2h-2zM500 514h2v2h-2zM556 514h4v2h-4zM568 514h4v2h-4zM592 514h4v2h-4zM616 514h8v2h-8zM656 514h6v2h-6zM688 514h4v2h-4zM28 516h16v2h-16zM58 516h4v2h-4zM80 516h4v2h-4zM100 516h4v2h-4zM112 516h4v2h-4zM170 516h4v2h-4zM182 516h4v2h-4zM208 516h4v2h-4zM274 516h4v2h-4zM304 516h4v2h-4zM316 516h4v2h-4zM388 516h4v2h-4zM418 516h4v2h-4zM436 516h4v2h-4zM448 516h4v2h-4zM460 516h4v2h-4zM472 516h4v2h-4zM482 516h2v2h-2zM488 516h6v2h-6zM500 516h2v2h-2zM546 516h2v2h-2zM556 516h4v2h-4zM568 516h4v2h-4zM592 516h4v2h-4zM618 516h6v2h-6zM658 516h4v2h-4zM688 516h4v2h-4zM28 518h16v2h-16zM58 518h4v2h-4zM80 518h4v2h-4zM100 518h4v2h-4zM112 518h4v2h-4zM170 518h4v2h-4zM182 518h4v2h-4zM208 518h4v2h-4zM274 518h4v2h-4zM304 518h4v2h-4zM316 518h4v2h-4zM342 518h8v2h-8zM388 518h4v2h-4zM418 518h4v2h-4zM436 518h4v2h-4zM448 518h4v2h-4zM460 518h4v2h-4zM472 518h4v2h-4zM488 518h2v2h-2zM494 518h2v2h-2zM542 518h2v2h-2zM546 518h2v2h-2zM556 518h4v2h-4zM568 518h4v2h-4zM592 518h4v2h-4zM620 518h4v2h-4zM658 518h4v2h-4zM688 518h4v2h-4zM28 520h16v2h-16zM58 520h4v2h-4zM80 520h4v2h-4zM102 520h12v2h-12zM126 520h4v2h-4zM134 520h4v2h-4zM172 520h12v2h-12zM200 520h12v2h-12zM224 520h8v2h-8zM274 520h4v2h-4zM294 520h14v2h-14zM316 520h14v2h-14zM340 520h4v2h-4zM348 520h4v2h-4zM388 520h14v2h-14zM418 520h4v2h-4zM436 520h16v2h-16zM460 520h14v2h-14zM488 520h2v2h-2zM496 520h2v2h-2zM538 520h2v2h-2zM542 520h2v2h-2zM546 520h2v2h-2zM556 520h16v2h-16zM584 520h12v2h-12zM624 520h2v2h-2zM658 520h4v2h-4zM680 520h12v2h-12zM28 522h16v2h-16zM58 522h4v2h-4zM80 522h4v2h-4zM100 522h16v2h-16zM126 522h4v2h-4zM134 522h4v2h-4zM170 522h16v2h-16zM200 522h12v2h-12zM222 522h12v2h-12zM274 522h4v2h-4zM292 522h16v2h-16zM316 522h16v2h-16zM340 522h12v2h-12zM390 522h14v2h-14zM418 522h4v2h-4zM436 522h16v2h-16zM460 522h14v2h-14zM488 522h2v2h-2zM496 522h2v2h-2zM534 522h2v2h-2zM538 522h2v2h-2zM542 522h2v2h-2zM546 522h2v2h-2zM558 522h14v2h-14zM584 522h12v2h-12zM626 522h6v2h-6zM658 522h4v2h-4zM680 522h12v2h-12zM28 524h16v2h-16zM58 524h4v2h-4zM80 524h4v2h-4zM100 524h4v2h-4zM112 524h4v2h-4zM126 524h4v2h-4zM134 524h4v2h-4zM170 524h4v2h-4zM182 524h4v2h-4zM208 524h4v2h-4zM222 524h4v2h-4zM230 524h4v2h-4zM274 524h4v2h-4zM292 524h4v2h-4zM328 524h4v2h-4zM340 524h4v2h-4zM348 524h4v2h-4zM400 524h4v2h-4zM418 524h4v2h-4zM436 524h4v2h-4zM448 524h4v2h-4zM460 524h4v2h-4zM472 524h4v2h-4zM488 524h2v2h-2zM496 524h2v2h-2zM530 524h2v2h-2zM534 524h2v2h-2zM538 524h2v2h-2zM542 524h2v2h-2zM546 524h2v2h-2zM568 524h4v2h-4zM592 524h4v2h-4zM626 524h8v2h-8zM658 524h4v2h-4zM688 524h4v2h-4zM28 526h16v2h-16zM58 526h4v2h-4zM80 526h4v2h-4zM100 526h4v2h-4zM112 526h4v2h-4zM126 526h4v2h-4zM134 526h4v2h-4zM170 526h4v2h-4zM182 526h4v2h-4zM208 526h4v2h-4zM222 526h4v2h-4zM230 526h4v2h-4zM274 526h4v2h-4zM292 526h4v2h-4zM328 526h4v2h-4zM400 526h4v2h-4zM418 526h4v2h-4zM436 526h4v2h-4zM448 526h4v2h-4zM460 526h4v2h-4zM472 526h4v2h-4zM488 526h2v2h-2zM496 526h2v2h-2zM568 526h4v2h-4zM592 526h4v2h-4zM608 526h4v2h-4zM618 526h2v2h-2zM628 526h8v2h-8zM658 526h4v2h-4zM688 526h4v2h-4zM28 528h16v2h-16zM58 528h4v2h-4zM80 528h4v2h-4zM100 528h4v2h-4zM112 528h4v2h-4zM126 528h4v2h-4zM134 528h4v2h-4zM170 528h4v2h-4zM182 528h4v2h-4zM208 528h4v2h-4zM222 528h12v2h-12zM274 528h4v2h-4zM292 528h4v2h-4zM328 528h4v2h-4zM340 528h4v2h-4zM400 528h4v2h-4zM418 528h4v2h-4zM436 528h4v2h-4zM448 528h4v2h-4zM460 528h4v2h-4zM472 528h4v2h-4zM488 528h2v2h-2zM494 528h2v2h-2zM568 528h4v2h-4zM592 528h4v2h-4zM608 528h4v2h-4zM630 528h8v2h-8zM658 528h4v2h-4zM688 528h4v2h-4zM28 530h16v2h-16zM58 530h4v2h-4zM80 530h4v2h-4zM100 530h4v2h-4zM112 530h4v2h-4zM128 530h8v2h-8zM170 530h4v2h-4zM182 530h4v2h-4zM208 530h4v2h-4zM222 530h12v2h-12zM274 530h4v2h-4zM292 530h4v2h-4zM328 530h4v2h-4zM340 530h12v2h-12zM400 530h4v2h-4zM418 530h4v2h-4zM436 530h4v2h-4zM448 530h4v2h-4zM460 530h4v2h-4zM472 530h4v2h-4zM482 530h2v2h-2zM488 530h6v2h-6zM500 530h2v2h-2zM568 530h4v2h-4zM592 530h4v2h-4zM614 530h2v2h-2zM632 530h6v2h-6zM658 530h4v2h-4zM688 530h4v2h-4zM28 532h16v2h-16zM56 532h8v2h-8zM78 532h8v2h-8zM90 532h4v2h-4zM100 532h16v2h-16zM130 532h4v2h-4zM170 532h16v2h-16zM188 532h4v2h-4zM196 532h16v2h-16zM222 532h4v2h-4zM230 532h4v2h-4zM272 532h8v2h-8zM292 532h16v2h-16zM316 532h16v2h-16zM340 532h4v2h-4zM348 532h4v2h-4zM388 532h16v2h-16zM418 532h4v2h-4zM436 532h4v2h-4zM448 532h4v2h-4zM460 532h16v2h-16zM482 532h2v2h-2zM500 532h2v2h-2zM556 532h16v2h-16zM580 532h16v2h-16zM634 532h4v2h-4zM656 532h8v2h-8zM676 532h16v2h-16zM28 534h16v2h-16zM56 534h8v2h-8zM78 534h8v2h-8zM90 534h4v2h-4zM102 534h12v2h-12zM172 534h12v2h-12zM188 534h4v2h-4zM198 534h12v2h-12zM222 534h4v2h-4zM230 534h4v2h-4zM272 534h8v2h-8zM292 534h16v2h-16zM316 534h14v2h-14zM340 534h4v2h-4zM348 534h4v2h-4zM390 534h12v2h-12zM418 534h4v2h-4zM436 534h4v2h-4zM448 534h4v2h-4zM460 534h14v2h-14zM482 534h6v2h-6zM496 534h6v2h-6zM558 534h12v2h-12zM582 534h12v2h-12zM616 534h4v2h-4zM656 534h8v2h-8zM678 534h12v2h-12zM28 536h16v2h-16zM616 536h4v2h-4z" fill="#fff"/>
</svg>
<div class="a" style="left:399px;top:578.5px;font-size:7.6px;line-height:normal;color:#111">NTSC</div>
<div class="a" style="left:399px;top:599.5px;font-size:7.6px;line-height:normal;color:#111">PAL</div>
<!--/OSD-->
<!--CONTENT-->
<svg width="0" height="0" style="position:absolute"><defs><linearGradient id="cbg" x1="0" y1="0" x2="1" y2="1"><stop offset="0" stop-color="#c9c9c9"/><stop offset="1" stop-color="#f4f4f4"/></linearGradient></defs></svg>
<div class="a" style="left:254px;top:79px;width:1px;height:33px;background:#9c9c9c"></div>
<div class="a" style="left:337px;top:79px;width:1px;height:33px;background:#9c9c9c"></div>
<div class="a" style="left:420px;top:79px;width:1px;height:33px;background:#9c9c9c"></div>
<div class="a" style="left:503px;top:79px;width:1px;height:33px;background:#9c9c9c"></div>
<div class="a" style="left:586px;top:79px;width:1px;height:33px;background:#9c9c9c"></div>
<div class="a" style="left:426px;top:77px;width:72px;height:34px;border-top:2px solid #838383;border-left:2px solid #838383;border-right:1px solid #fafafa;border-bottom:1px solid #fafafa;background:repeating-conic-gradient(#ffffff 0 25%,#e9e9e9 0 50%) 0 0/2px 2px"></div>
<div class="a" style="left:175.8px;width:80px;text-align:center;top:88.05px;font-size:11px;line-height:normal;color:#000;">Settings</div>
<div class="a" style="left:256.0px;width:80px;text-align:center;top:88.05px;font-size:11px;line-height:normal;color:#000;">Screen 1</div>
<div class="a" style="left:339.0px;width:80px;text-align:center;top:88.05px;font-size:11px;line-height:normal;color:#000;">Screen 2</div>
<div class="a" style="left:423.5px;width:80px;text-align:center;top:89.05px;font-size:11px;line-height:normal;color:#000;">Screen 3</div>
<div class="a" style="left:505.5px;width:80px;text-align:center;top:88.05px;font-size:11px;line-height:normal;color:#000;">Screen 4</div>
<div class="a gb" style="left:193px;top:707px"></div>
<svg class="a" style="left:209px;top:719px" width="13" height="13" viewBox="0 0 13 13"><rect x="0.5" y="0.5" width="12" height="12" fill="#f2f2f2" stroke="#d8d8d8"/><rect x="2.5" y="2.5" width="8" height="8" fill="url(#cbg)"/><path d="M3.2 7.3 L5.4 10.3 L9.6 2.6" fill="none" stroke="#4b5591" stroke-width="1.9" stroke-linejoin="round" stroke-linecap="round"/></svg>
<div class="a" style="left:232px;top:720.86px;font-size:11.2px;line-height:normal;color:#f0f0f0;">CLK</div>
<div class="a gb" style="left:374px;top:707px"></div>
<svg class="a" style="left:390px;top:719px" width="13" height="13" viewBox="0 0 13 13"><rect x="0.5" y="0.5" width="12" height="12" fill="#f2f2f2" stroke="#d8d8d8"/><rect x="2.5" y="2.5" width="8" height="8" fill="url(#cbg)"/></svg>
<div class="a" style="left:413px;top:720.86px;font-size:11.2px;line-height:normal;color:#f0f0f0;">ASPD1</div>
<div class="a gb" style="left:555px;top:707px"></div>
<svg class="a" style="left:571px;top:719px" width="13" height="13" viewBox="0 0 13 13"><rect x="0.5" y="0.5" width="12" height="12" fill="#f2f2f2" stroke="#d8d8d8"/><rect x="2.5" y="2.5" width="8" height="8" fill="url(#cbg)"/></svg>
<div class="a" style="left:594px;top:720.86px;font-size:11.2px;line-height:normal;color:#f0f0f0;">ASPD2</div>
<div class="a gb" style="left:736px;top:707px"></div>
<svg class="a" style="left:752px;top:719px" width="13" height="13" viewBox="0 0 13 13"><rect x="0.5" y="0.5" width="12" height="12" fill="#f2f2f2" stroke="#d8d8d8"/><rect x="2.5" y="2.5" width="8" height="8" fill="url(#cbg)"/></svg>
<div class="a" style="left:775px;top:720.86px;font-size:11.2px;line-height:normal;color:#f0f0f0;">BAT2USED</div>
<div class="a gb" style="left:917px;top:707px"></div>
<svg class="a" style="left:933px;top:719px" width="13" height="13" viewBox="0 0 13 13"><rect x="0.5" y="0.5" width="12" height="12" fill="#f2f2f2" stroke="#d8d8d8"/><rect x="2.5" y="2.5" width="8" height="8" fill="url(#cbg)"/></svg>
<div class="a" style="left:956px;top:720.86px;font-size:11.2px;line-height:normal;color:#f0f0f0;">BAT2_VLT</div>
<div class="a gb" style="left:1098px;top:707px"></div>
<svg class="a" style="left:1114px;top:719px" width="13" height="13" viewBox="0 0 13 13"><rect x="0.5" y="0.5" width="12" height="12" fill="#f2f2f2" stroke="#d8d8d8"/><rect x="2.5" y="2.5" width="8" height="8" fill="url(#cbg)"/></svg>
<div class="a" style="left:1137px;top:720.86px;font-size:11.2px;line-height:normal;color:#f0f0f0;">ATEMP</div>
<div class="a gb" style="left:193px;top:748px"></div>
<svg class="a" style="left:209px;top:760px" width="13" height="13" viewBox="0 0 13 13"><rect x="0.5" y="0.5" width="12" height="12" fill="#f2f2f2" stroke="#d8d8d8"/><rect x="2.5" y="2.5" width="8" height="8" fill="url(#cbg)"/></svg>
<div class="a" style="left:232px;top:761.86px;font-size:11.2px;line-height:normal;color:#f0f0f0;">BTEMP</div>
<div class="a gb" style="left:374px;top:748px"></div>
<svg class="a" style="left:390px;top:760px" width="13" height="13" viewBox="0 0 13 13"><rect x="0.5" y="0.5" width="12" height="12" fill="#f2f2f2" stroke="#d8d8d8"/><rect x="2.5" y="2.5" width="8" height="8" fill="url(#cbg)"/></svg>
<div class="a" style="left:413px;top:761.86px;font-size:11.2px;line-height:normal;color:#f0f0f0;">EFF</div>
<div class="a gb" style="left:555px;top:748px"></div>
<svg class="a" style="left:571px;top:760px" width="13" height="13" viewBox="0 0 13 13"><rect x="0.5" y="0.5" width="12" height="12" fill="#f2f2f2" stroke="#d8d8d8"/><rect x="2.5" y="2.5" width="8" height="8" fill="url(#cbg)"/></svg>
<div class="a" style="left:594px;top:761.86px;font-size:11.2px;line-height:normal;color:#f0f0f0;">CLIMBEFF</div>
<div class="a gb" style="left:736px;top:748px"></div>
<svg class="a" style="left:752px;top:760px" width="13" height="13" viewBox="0 0 13 13"><rect x="0.5" y="0.5" width="12" height="12" fill="#f2f2f2" stroke="#d8d8d8"/><rect x="2.5" y="2.5" width="8" height="8" fill="url(#cbg)"/><path d="M3.2 7.3 L5.4 10.3 L9.6 2.6" fill="none" stroke="#4b5591" stroke-width="1.9" stroke-linejoin="round" stroke-linecap="round"/></svg>
<div class="a" style="left:775px;top:761.86px;font-size:11.2px;line-height:normal;color:#f0f0f0;">FLTIME</div>
<div class="a gb" style="left:917px;top:748px"></div>
<svg class="a" style="left:933px;top:760px" width="13" height="13" viewBox="0 0 13 13"><rect x="0.5" y="0.5" width="12" height="12" fill="#f2f2f2" stroke="#d8d8d8"/><rect x="2.5" y="2.5" width="8" height="8" fill="url(#cbg)"/></svg>
<div class="a" style="left:956px;top:761.86px;font-size:11.2px;line-height:normal;color:#f0f0f0;">STATS</div>
<div class="a gb" style="left:1098px;top:748px"></div>
<svg class="a" style="left:1114px;top:760px" width="13" height="13" viewBox="0 0 13 13"><rect x="0.5" y="0.5" width="12" height="12" fill="#f2f2f2" stroke="#d8d8d8"/><rect x="2.5" y="2.5" width="8" height="8" fill="url(#cbg)"/></svg>
<div class="a" style="left:1137px;top:761.86px;font-size:11.2px;line-height:normal;color:#f0f0f0;">DIST</div>
<div class="a gb" style="left:193px;top:789px"></div>
<svg class="a" style="left:209px;top:801px" width="13" height="13" viewBox="0 0 13 13"><rect x="0.5" y="0.5" width="12" height="12" fill="#f2f2f2" stroke="#d8d8d8"/><rect x="2.5" y="2.5" width="8" height="8" fill="url(#cbg)"/></svg>
<div class="a" style="left:232px;top:802.86px;font-size:11.2px;line-height:normal;color:#f0f0f0;">XTRACK</div>
<div class="a gb" style="left:374px;top:789px"></div>
<svg class="a" style="left:390px;top:801px" width="13" height="13" viewBox="0 0 13 13"><rect x="0.5" y="0.5" width="12" height="12" fill="#f2f2f2" stroke="#d8d8d8"/><rect x="2.5" y="2.5" width="8" height="8" fill="url(#cbg)"/></svg>
<div class="a" style="left:413px;top:802.86px;font-size:11.2px;line-height:normal;color:#f0f0f0;">WAYPOINT</div>
<div class="a gb" style="left:555px;top:789px"></div>
<svg class="a" style="left:571px;top:801px" width="13" height="13" viewBox="0 0 13 13"><rect x="0.5" y="0.5" width="12" height="12" fill="#f2f2f2" stroke="#d8d8d8"/><rect x="2.5" y="2.5" width="8" height="8" fill="url(#cbg)"/></svg>
<div class="a" style="left:594px;top:802.86px;font-size:11.2px;line-height:normal;color:#f0f0f0;">HDOP</div>
<div class="a gb" style="left:736px;top:789px"></div>
<svg class="a" style="left:752px;top:801px" width="13" height="13" viewBox="0 0 13 13"><rect x="0.5" y="0.5" width="12" height="12" fill="#f2f2f2" stroke="#d8d8d8"/><rect x="2.5" y="2.5" width="8" height="8" fill="url(#cbg)"/></svg>
<div class="a" style="left:775px;top:802.86px;font-size:11.2px;line-height:normal;color:#f0f0f0;">TEMP</div>
<div class="a gb" style="left:917px;top:789px"></div>
<svg class="a" style="left:933px;top:801px" width="13" height="13" viewBox="0 0 13 13"><rect x="0.5" y="0.5" width="12" height="12" fill="#f2f2f2" stroke="#d8d8d8"/><rect x="2.5" y="2.5" width="8" height="8" fill="url(#cbg)"/></svg>
<div class="a" style="left:956px;top:802.86px;font-size:11.2px;line-height:normal;color:#f0f0f0;">PITCH</div>
<div class="a gb" style="left:1098px;top:789px"></div>
<svg class="a" style="left:1114px;top:801px" width="13" height="13" viewBox="0 0 13 13"><rect x="0.5" y="0.5" width="12" height="12" fill="#f2f2f2" stroke="#d8d8d8"/><rect x="2.5" y="2.5" width="8" height="8" fill="url(#cbg)"/></svg>
<div class="a" style="left:1137px;top:802.86px;font-size:11.2px;line-height:normal;color:#f0f0f0;">ROLL</div>
<div class="a gb" style="left:193px;top:830px"></div>
<svg class="a" style="left:209px;top:842px" width="13" height="13" viewBox="0 0 13 13"><rect x="0.5" y="0.5" width="12" height="12" fill="#f2f2f2" stroke="#d8d8d8"/><rect x="2.5" y="2.5" width="8" height="8" fill="url(#cbg)"/></svg>
<div class="a" style="left:232px;top:843.86px;font-size:11.2px;line-height:normal;color:#f0f0f0;">GPSLONG</div>
<div class="a gb" style="left:374px;top:830px"></div>
<svg class="a" style="left:390px;top:842px" width="13" height="13" viewBox="0 0 13 13"><rect x="0.5" y="0.5" width="12" height="12" fill="#f2f2f2" stroke="#d8d8d8"/><rect x="2.5" y="2.5" width="8" height="8" fill="url(#cbg)"/></svg>
<div class="a" style="left:413px;top:843.86px;font-size:11.2px;line-height:normal;color:#f0f0f0;">GPSLAT</div>
<div class="a gb" style="left:555px;top:830px"></div>
<svg class="a" style="left:571px;top:842px" width="13" height="13" viewBox="0 0 13 13"><rect x="0.5" y="0.5" width="12" height="12" fill="#f2f2f2" stroke="#d8d8d8"/><rect x="2.5" y="2.5" width="8" height="8" fill="url(#cbg)"/></svg>
<div class="a" style="left:594px;top:843.86px;font-size:11.2px;line-height:normal;color:#f0f0f0;">BLHAMPS</div>
<div class="a gb" style="left:736px;top:830px"></div>
<svg class="a" style="left:752px;top:842px" width="13" height="13" viewBox="0 0 13 13"><rect x="0.5" y="0.5" width="12" height="12" fill="#f2f2f2" stroke="#d8d8d8"/><rect x="2.5" y="2.5" width="8" height="8" fill="url(#cbg)"/></svg>
<div class="a" style="left:775px;top:843.86px;font-size:11.2px;line-height:normal;color:#f0f0f0;">BLHRPM</div>
<div class="a gb" style="left:917px;top:830px"></div>
<svg class="a" style="left:933px;top:842px" width="13" height="13" viewBox="0 0 13 13"><rect x="0.5" y="0.5" width="12" height="12" fill="#f2f2f2" stroke="#d8d8d8"/><rect x="2.5" y="2.5" width="8" height="8" fill="url(#cbg)"/></svg>
<div class="a" style="left:956px;top:843.86px;font-size:11.2px;line-height:normal;color:#f0f0f0;">BLHTEMP</div>
<div class="a gb" style="left:1098px;top:830px"></div>
<svg class="a" style="left:1114px;top:842px" width="13" height="13" viewBox="0 0 13 13"><rect x="0.5" y="0.5" width="12" height="12" fill="#f2f2f2" stroke="#d8d8d8"/><rect x="2.5" y="2.5" width="8" height="8" fill="url(#cbg)"/><path d="M3.2 7.3 L5.4 10.3 L9.6 2.6" fill="none" stroke="#4b5591" stroke-width="1.9" stroke-linejoin="round" stroke-linecap="round"/></svg>
<div class="a" style="left:1137px;top:843.86px;font-size:11.2px;line-height:normal;color:#f0f0f0;">VSPEED</div>
<div class="a gb" style="left:193px;top:871px"></div>
<svg class="a" style="left:209px;top:883px" width="13" height="13" viewBox="0 0 13 13"><rect x="0.5" y="0.5" width="12" height="12" fill="#f2f2f2" stroke="#d8d8d8"/><rect x="2.5" y="2.5" width="8" height="8" fill="url(#cbg)"/><path d="M3.2 7.3 L5.4 10.3 L9.6 2.6" fill="none" stroke="#4b5591" stroke-width="1.9" stroke-linejoin="round" stroke-linecap="round"/></svg>
<div class="a" style="left:232px;top:884.86px;font-size:11.2px;line-height:normal;color:#f0f0f0;">ASPEED</div>
<div class="a gb" style="left:374px;top:871px"></div>
<svg class="a" style="left:390px;top:883px" width="13" height="13" viewBox="0 0 13 13"><rect x="0.5" y="0.5" width="12" height="12" fill="#f2f2f2" stroke="#d8d8d8"/><rect x="2.5" y="2.5" width="8" height="8" fill="url(#cbg)"/></svg>
<div class="a" style="left:413px;top:884.86px;font-size:11.2px;line-height:normal;color:#f0f0f0;">WIND</div>
<div class="a gb" style="left:555px;top:871px"></div>
<svg class="a" style="left:571px;top:883px" width="13" height="13" viewBox="0 0 13 13"><rect x="0.5" y="0.5" width="12" height="12" fill="#f2f2f2" stroke="#d8d8d8"/><rect x="2.5" y="2.5" width="8" height="8" fill="url(#cbg)"/></svg>
<div class="a" style="left:594px;top:884.86px;font-size:11.2px;line-height:normal;color:#f0f0f0;">COMPASS</div>
<div class="a gb" style="left:736px;top:871px"></div>
<svg class="a" style="left:752px;top:883px" width="13" height="13" viewBox="0 0 13 13"><rect x="0.5" y="0.5" width="12" height="12" fill="#f2f2f2" stroke="#d8d8d8"/><rect x="2.5" y="2.5" width="8" height="8" fill="url(#cbg)"/><path d="M3.2 7.3 L5.4 10.3 L9.6 2.6" fill="none" stroke="#4b5591" stroke-width="1.9" stroke-linejoin="round" stroke-linecap="round"/></svg>
<div class="a" style="left:775px;top:884.86px;font-size:11.2px;line-height:normal;color:#f0f0f0;">THROTTLE</div>
<div class="a gb" style="left:917px;top:871px"></div>
<svg class="a" style="left:933px;top:883px" width="13" height="13" viewBox="0 0 13 13"><rect x="0.5" y="0.5" width="12" height="12" fill="#f2f2f2" stroke="#d8d8d8"/><rect x="2.5" y="2.5" width="8" height="8" fill="url(#cbg)"/></svg>
<div class="a" style="left:956px;top:884.86px;font-size:11.2px;line-height:normal;color:#f0f0f0;">HEADING</div>
<div class="a gb" style="left:1098px;top:871px"></div>
<svg class="a" style="left:1114px;top:883px" width="13" height="13" viewBox="0 0 13 13"><rect x="0.5" y="0.5" width="12" height="12" fill="#f2f2f2" stroke="#d8d8d8"/><rect x="2.5" y="2.5" width="8" height="8" fill="url(#cbg)"/><path d="M3.2 7.3 L5.4 10.3 L9.6 2.6" fill="none" stroke="#4b5591" stroke-width="1.9" stroke-linejoin="round" stroke-linecap="round"/></svg>
<div class="a" style="left:1137px;top:884.86px;font-size:11.2px;line-height:normal;color:#f0f0f0;">HOME</div>
<div class="a gb" style="left:193px;top:912px"></div>
<svg class="a" style="left:209px;top:924px" width="13" height="13" viewBox="0 0 13 13"><rect x="0.5" y="0.5" width="12" height="12" fill="#f2f2f2" stroke="#d8d8d8"/><rect x="2.5" y="2.5" width="8" height="8" fill="url(#cbg)"/><path d="M3.2 7.3 L5.4 10.3 L9.6 2.6" fill="none" stroke="#4b5591" stroke-width="1.9" stroke-linejoin="round" stroke-linecap="round"/></svg>
<div class="a" style="left:232px;top:925.86px;font-size:11.2px;line-height:normal;color:#f0f0f0;">HORIZON</div>
<div class="a gb" style="left:374px;top:912px"></div>
<svg class="a" style="left:390px;top:924px" width="13" height="13" viewBox="0 0 13 13"><rect x="0.5" y="0.5" width="12" height="12" fill="#f2f2f2" stroke="#d8d8d8"/><rect x="2.5" y="2.5" width="8" height="8" fill="url(#cbg)"/><path d="M3.2 7.3 L5.4 10.3 L9.6 2.6" fill="none" stroke="#4b5591" stroke-width="1.9" stroke-linejoin="round" stroke-linecap="round"/></svg>
<div class="a" style="left:413px;top:925.86px;font-size:11.2px;line-height:normal;color:#f0f0f0;">GSPEED</div>
<div class="a gb" style="left:555px;top:912px"></div>
<svg class="a" style="left:571px;top:924px" width="13" height="13" viewBox="0 0 13 13"><rect x="0.5" y="0.5" width="12" height="12" fill="#f2f2f2" stroke="#d8d8d8"/><rect x="2.5" y="2.5" width="8" height="8" fill="url(#cbg)"/><path d="M3.2 7.3 L5.4 10.3 L9.6 2.6" fill="none" stroke="#4b5591" stroke-width="1.9" stroke-linejoin="round" stroke-linecap="round"/></svg>
<div class="a" style="left:594px;top:925.86px;font-size:11.2px;line-height:normal;color:#f0f0f0;">MESSAGE</div>
<div class="a gb" style="left:736px;top:912px"></div>
<svg class="a" style="left:752px;top:924px" width="13" height="13" viewBox="0 0 13 13"><rect x="0.5" y="0.5" width="12" height="12" fill="#f2f2f2" stroke="#d8d8d8"/><rect x="2.5" y="2.5" width="8" height="8" fill="url(#cbg)"/><path d="M3.2 7.3 L5.4 10.3 L9.6 2.6" fill="none" stroke="#4b5591" stroke-width="1.9" stroke-linejoin="round" stroke-linecap="round"/></svg>
<div class="a" style="left:775px;top:925.86px;font-size:11.2px;line-height:normal;color:#f0f0f0;">FLTMODE</div>
<div class="a gb" style="left:917px;top:912px"></div>
<svg class="a" style="left:933px;top:924px" width="13" height="13" viewBox="0 0 13 13"><rect x="0.5" y="0.5" width="12" height="12" fill="#f2f2f2" stroke="#d8d8d8"/><rect x="2.5" y="2.5" width="8" height="8" fill="url(#cbg)"/><path d="M3.2 7.3 L5.4 10.3 L9.6 2.6" fill="none" stroke="#4b5591" stroke-width="1.9" stroke-linejoin="round" stroke-linecap="round"/></svg>
<div class="a" style="left:956px;top:925.86px;font-size:11.2px;line-height:normal;color:#f0f0f0;">SATS</div>
<div class="a gb" style="left:1098px;top:912px"></div>
<svg class="a" style="left:1114px;top:924px" width="13" height="13" viewBox="0 0 13 13"><rect x="0.5" y="0.5" width="12" height="12" fill="#f2f2f2" stroke="#d8d8d8"/><rect x="2.5" y="2.5" width="8" height="8" fill="url(#cbg)"/><path d="M3.2 7.3 L5.4 10.3 L9.6 2.6" fill="none" stroke="#4b5591" stroke-width="1.9" stroke-linejoin="round" stroke-linecap="round"/></svg>
<div class="a" style="left:1137px;top:925.86px;font-size:11.2px;line-height:normal;color:#f0f0f0;">BATUSED</div>
<div class="a gb" style="left:193px;top:953px"></div>
<svg class="a" style="left:209px;top:965px" width="13" height="13" viewBox="0 0 13 13"><rect x="0.5" y="0.5" width="12" height="12" fill="#f2f2f2" stroke="#d8d8d8"/><rect x="2.5" y="2.5" width="8" height="8" fill="url(#cbg)"/><path d="M3.2 7.3 L5.4 10.3 L9.6 2.6" fill="none" stroke="#4b5591" stroke-width="1.9" stroke-linejoin="round" stroke-linecap="round"/></svg>
<div class="a" style="left:232px;top:966.86px;font-size:11.2px;line-height:normal;color:#f0f0f0;">CURRENT</div>
<div class="a gb" style="left:374px;top:953px"></div>
<svg class="a" style="left:390px;top:965px" width="13" height="13" viewBox="0 0 13 13"><rect x="0.5" y="0.5" width="12" height="12" fill="#f2f2f2" stroke="#d8d8d8"/><rect x="2.5" y="2.5" width="8" height="8" fill="url(#cbg)"/><path d="M3.2 7.3 L5.4 10.3 L9.6 2.6" fill="none" stroke="#4b5591" stroke-width="1.9" stroke-linejoin="round" stroke-linecap="round"/></svg>
<div class="a" style="left:413px;top:966.86px;font-size:11.2px;line-height:normal;color:#f0f0f0;">RSSI</div>
<div class="a gb" style="left:555px;top:953px"></div>
<svg class="a" style="left:571px;top:965px" width="13" height="13" viewBox="0 0 13 13"><rect x="0.5" y="0.5" width="12" height="12" fill="#f2f2f2" stroke="#d8d8d8"/><rect x="2.5" y="2.5" width="8" height="8" fill="url(#cbg)"/><path d="M3.2 7.3 L5.4 10.3 L9.6 2.6" fill="none" stroke="#4b5591" stroke-width="1.9" stroke-linejoin="round" stroke-linecap="round"/></svg>
<div class="a" style="left:594px;top:966.86px;font-size:11.2px;line-height:normal;color:#f0f0f0;">BAT_VOLT</div>
<div class="a gb" style="left:736px;top:953px"></div>
<svg class="a" style="left:752px;top:965px" width="13" height="13" viewBox="0 0 13 13"><rect x="0.5" y="0.5" width="12" height="12" fill="#f2f2f2" stroke="#d8d8d8"/><rect x="2.5" y="2.5" width="8" height="8" fill="url(#cbg)"/><path d="M3.2 7.3 L5.4 10.3 L9.6 2.6" fill="none" stroke="#4b5591" stroke-width="1.9" stroke-linejoin="round" stroke-linecap="round"/></svg>
<div class="a" style="left:775px;top:966.86px;font-size:11.2px;line-height:normal;color:#f0f0f0;">ALTITUDE</div>
<div class="a grp" style="left:1326px;top:129px;width:394px;height:94px"></div><div class="a" style="left:1333px;top:123px;width:70px;height:10px;background:#262729"></div><div class="a" style="left:1335px;top:123.09px;font-size:10.4px;line-height:normal;color:#f4f4f4;">Editor Options</div>
<div class="a grp" style="left:1326px;top:236px;width:394px;height:386px"></div><div class="a" style="left:1333px;top:230px;width:77px;height:10px;background:#262729"></div><div class="a" style="left:1335px;top:230.09px;font-size:10.4px;line-height:normal;color:#f4f4f4;">Screen Options</div>
<div class="a grp" style="left:1326px;top:635px;width:394px;height:386px"></div><div class="a" style="left:1332px;top:629px;width:64px;height:10px;background:#262729"></div><div class="a" style="left:1334px;top:629.09px;font-size:10.4px;line-height:normal;color:#f4f4f4;">Item Options</div>
<svg class="a" style="left:1349px;top:152px" width="13" height="13" viewBox="0 0 13 13"><rect x="0.5" y="0.5" width="12" height="12" fill="#f2f2f2" stroke="#d8d8d8"/><rect x="2.5" y="2.5" width="8" height="8" fill="url(#cbg)"/></svg>
<div class="a" style="left:1366.5px;top:152.04px;font-size:11px;line-height:normal;color:#f0f0f0;">Reduced View</div>
<div class="a btn" style="left:1472px;top:143px;width:108px;height:29px;line-height:25px">Copy Layout</div>
<div class="a btn" style="left:1588px;top:143px;width:108px;height:29px;line-height:25px">Paste Layout</div>
<div class="a btn" style="left:1472px;top:181px;width:108px;height:30px;line-height:26px">Clear All</div>
<div class="a" style="left:1346.5px;top:261.05px;font-size:11px;line-height:normal;color:#f0f0f0;">OSD3_ENABLE</div>
<svg class="a" style="left:1484px;top:260px" width="13" height="13" viewBox="0 0 13 13"><rect x="0.5" y="0.5" width="12" height="12" fill="#f2f2f2" stroke="#d8d8d8"/><rect x="2.5" y="2.5" width="8" height="8" fill="url(#cbg)"/><path d="M3.2 7.3 L5.4 10.3 L9.6 2.6" fill="none" stroke="#4b5591" stroke-width="1.9" stroke-linejoin="round" stroke-linecap="round"/></svg>
<div class="a" style="left:1346.5px;top:295.05px;font-size:11px;line-height:normal;color:#f0f0f0;">OSD3_CHAN_MAX</div>
<div class="a" style="left:1481px;top:292px;width:153px;height:13px;background:#444546"></div>
<div class="a" style="left:1482px;top:294.00px;font-size:10.5px;line-height:normal;color:#f4f4f4;">1800</div>
<div class="a" style="left:1346.5px;top:331.05px;font-size:11px;line-height:normal;color:#f0f0f0;">OSD3_CHAN_MIN</div>
<div class="a" style="left:1481px;top:328px;width:153px;height:13px;background:#444546"></div>
<div class="a" style="left:1482px;top:330.00px;font-size:10.5px;line-height:normal;color:#f4f4f4;">1650</div>
<div class="a btn" style="left:1752px;top:102px;width:141px;height:28px;line-height:24px"><span style="font-size:11.7px">Write customization</span></div>
<svg class="a" style="left:1754px;top:142px" width="13" height="13" viewBox="0 0 13 13"><rect x="0.5" y="0.5" width="12" height="12" fill="#f2f2f2" stroke="#d8d8d8"/><rect x="2.5" y="2.5" width="8" height="8" fill="url(#cbg)"/><path d="M3.2 7.3 L5.4 10.3 L9.6 2.6" fill="none" stroke="#4b5591" stroke-width="1.9" stroke-linejoin="round" stroke-linecap="round"/></svg>
<div class="a" style="left:1771px;top:142.04px;font-size:11px;line-height:normal;color:#f0f0f0;">Auto write on leaving</div>
<div class="a btn" style="left:1752px;top:203px;width:141px;height:28px;line-height:24px">Refresh</div>
<div class="a btn" style="left:1752px;top:241px;width:141px;height:28px;line-height:24px">Discard all changes</div>
<!--/CONTENT-->

</body></html>
